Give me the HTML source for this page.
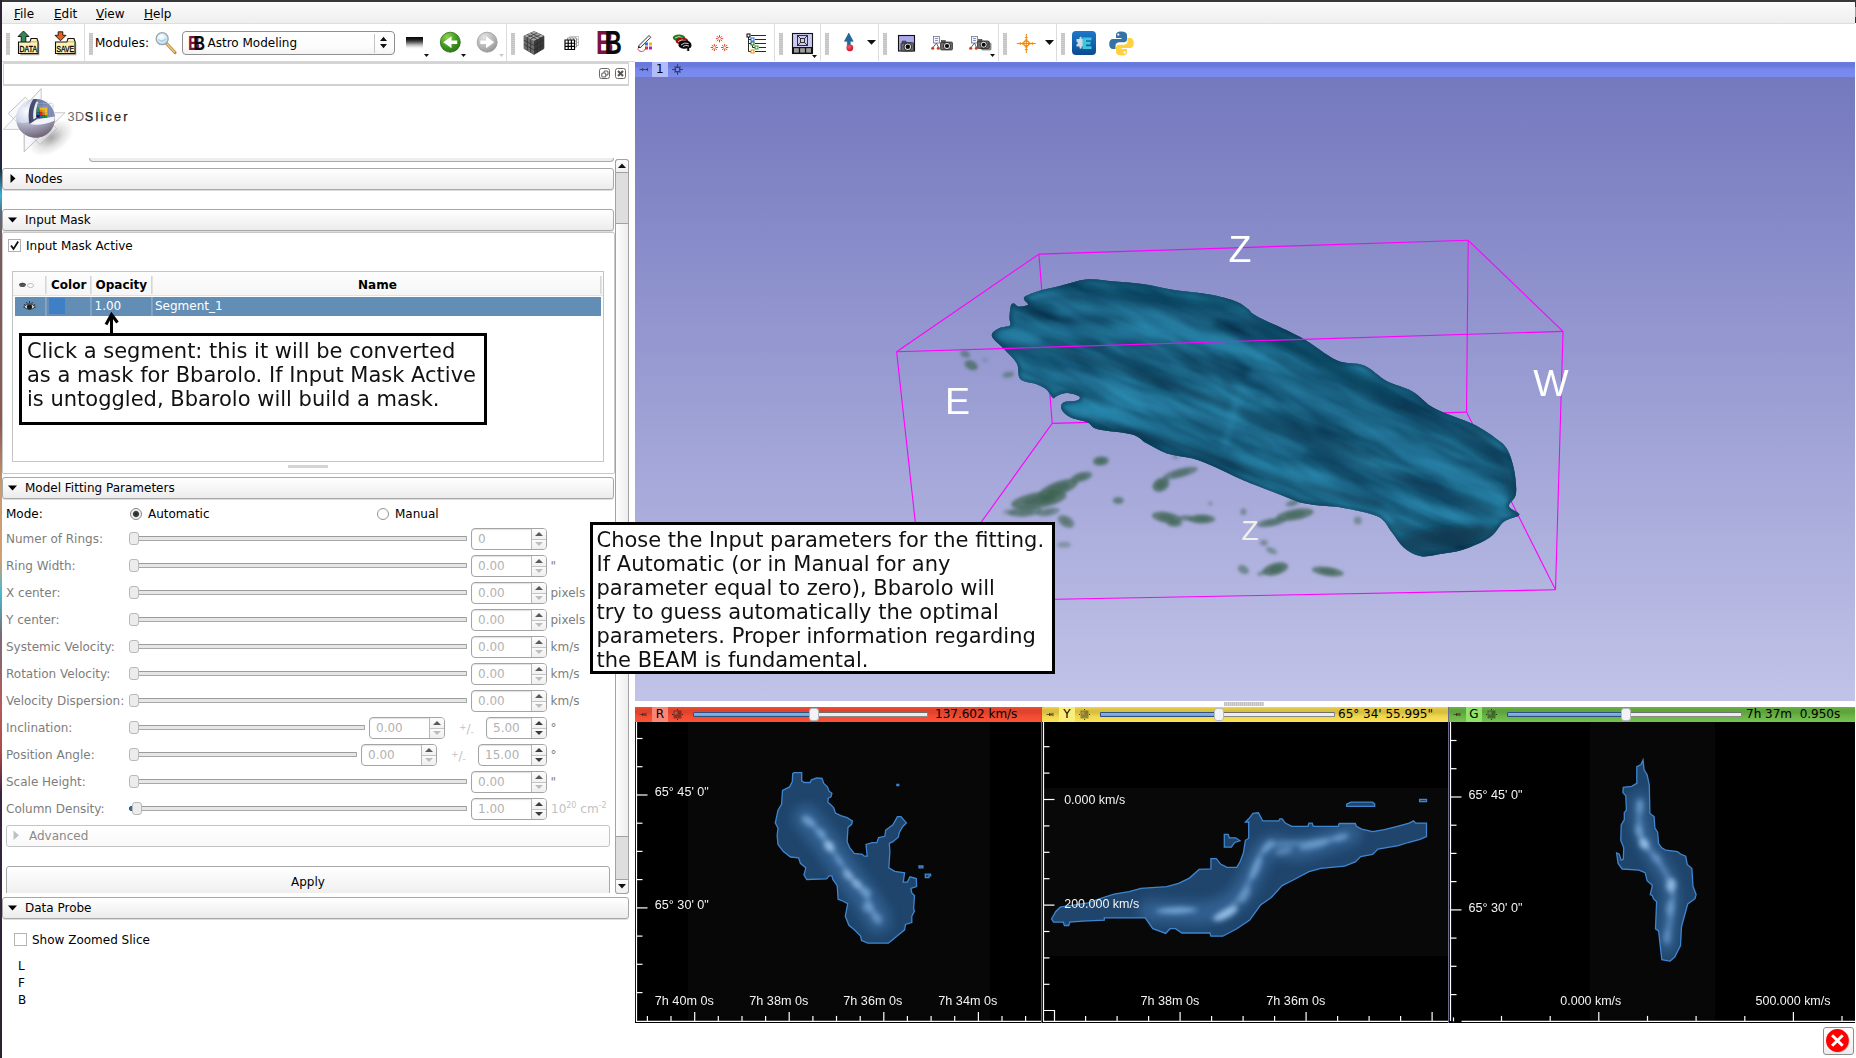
<!DOCTYPE html>
<html><head><meta charset="utf-8"><title>3D Slicer - Astro Modeling</title>
<style>
*{box-sizing:border-box;margin:0;padding:0}
html,body{width:1856px;height:1058px;overflow:hidden;background:#fff}
body{font-family:"DejaVu Sans","Liberation Sans",sans-serif;font-size:12px;color:#000;position:relative}
.a{position:absolute}
.t{position:absolute;white-space:nowrap;line-height:14px;height:14px}
.dis{color:#a0a0a0}
.btn{position:absolute;border:1px solid #a8a8a8;border-radius:3px;background:linear-gradient(#ffffff,#f4f4f4 60%,#ececec);box-shadow:0 1px 0 #ddd}
.sl{position:absolute;height:4px;border:1px solid #a8a8a8;border-top-color:#9c9c9c;border-radius:1px;background:#e6e6e6}
.hd{position:absolute;width:9px;height:13px;border:1px solid #b9b9b9;border-radius:3px;background:#ececec}
.sp{position:absolute;height:22px;border:1px solid #a4a4a4;border-radius:4px;background:#fff;color:#b2b2b2;box-shadow:inset 0 1px 1px #e2e2e2}
.sp i{position:absolute;right:0;top:0;bottom:0;width:15px;border-left:1px solid #b8b8b8;background:linear-gradient(#fdfdfd,#f1f1f1 49%,#c4c4c4 49%,#c4c4c4 53%,#fbfbfb 53%,#efefef);border-radius:0 3px 3px 0}
.sp i:before{content:"";position:absolute;left:3px;top:3px;border:4px solid transparent;border-top:0;border-bottom:4px solid #5a5a5a}
.sp i:after{content:"";position:absolute;left:3px;bottom:3px;border:4px solid transparent;border-bottom:0;border-top:4px solid #bdbdbd}
.sp.on i:after{border-top-color:#3c3c3c}.sp.on i:before{border-bottom-color:#3c3c3c}
.sp span{position:absolute;left:6px;top:3px;line-height:14px}
.grip{position:absolute;width:4px;background:#c8c8c8}
svg{position:absolute;overflow:visible}
</style></head><body>
<!-- window chrome -->
<div class="a" style="left:0;top:0;width:1856px;height:2px;background:#38373a"></div>
<div class="a" style="left:0;top:0;width:2px;height:1058px;background:linear-gradient(#2a2230 0,#2a2438 14%,#1c2a48 16%,#3ab4d8 18.500%,#5a6a7c 20%,#7a5a5c 23%,#8a5a54 40%,#c89a70 46%,#cfa070 53%,#48b8d0 56%,#7a6a78 60%,#b85a58 67%,#b04848 71%,#3a2440 75%,#2a2230 100%)"></div>
<div class="a" id="menubar" style="left:2px;top:2px;width:1853px;height:22px;background:linear-gradient(#fff 0,#fafafa 8%,#eeeeee 100%);border-bottom:1px solid #dedede"></div>
<div class="a" style="left:1855px;top:2px;width:1px;height:21px;background:#35302d"></div>
<div class="a" style="left:1855px;top:7px;width:1px;height:10px;background:#e8953a"></div>
<div class="t" style="left:14px;top:7px"><u>F</u>ile</div>
<div class="t" style="left:54px;top:7px"><u>E</u>dit</div>
<div class="t" style="left:96px;top:7px"><u>V</u>iew</div>
<div class="t" style="left:144px;top:7px"><u>H</u>elp</div>
<!-- toolbar -->
<div class="a" style="left:2px;top:24px;width:1853px;height:37px;background:#fff"></div>
<div class="a" style="left:2px;top:61px;width:633px;height:1px;background:#d6d6d6"></div>
<div class="a" style="left:6px;top:33px;width:4px;height:22px;background:repeating-linear-gradient(#c2c2c2 0 1px,#d0d0d0 1px 2px)"></div>
<div class="a" style="left:89px;top:33px;width:4px;height:22px;background:repeating-linear-gradient(#c2c2c2 0 1px,#d0d0d0 1px 2px)"></div>
<div class="a" style="left:511px;top:33px;width:4px;height:22px;background:repeating-linear-gradient(#c2c2c2 0 1px,#d0d0d0 1px 2px)"></div>
<div class="a" style="left:779px;top:33px;width:4px;height:22px;background:repeating-linear-gradient(#c2c2c2 0 1px,#d0d0d0 1px 2px)"></div>
<div class="a" style="left:825px;top:33px;width:4px;height:22px;background:repeating-linear-gradient(#c2c2c2 0 1px,#d0d0d0 1px 2px)"></div>
<div class="a" style="left:883px;top:33px;width:4px;height:22px;background:repeating-linear-gradient(#c2c2c2 0 1px,#d0d0d0 1px 2px)"></div>
<div class="a" style="left:1003px;top:33px;width:4px;height:22px;background:repeating-linear-gradient(#c2c2c2 0 1px,#d0d0d0 1px 2px)"></div>
<div class="a" style="left:1061px;top:33px;width:4px;height:22px;background:repeating-linear-gradient(#c2c2c2 0 1px,#d0d0d0 1px 2px)"></div>
<div class="a" style="left:84px;top:24px;width:1px;height:37px;background:#dcdcdc"></div>
<div class="a" style="left:506px;top:24px;width:1px;height:37px;background:#dcdcdc"></div>
<div class="a" style="left:774px;top:24px;width:1px;height:37px;background:#dcdcdc"></div>
<div class="a" style="left:820px;top:24px;width:1px;height:37px;background:#dcdcdc"></div>
<div class="a" style="left:878px;top:24px;width:1px;height:37px;background:#dcdcdc"></div>
<div class="a" style="left:998px;top:24px;width:1px;height:37px;background:#dcdcdc"></div>
<div class="a" style="left:1056px;top:24px;width:1px;height:37px;background:#dcdcdc"></div>
<svg style="left:17px;top:30px" width="24" height="26" viewBox="0 0 24 26"><path d="M2.500 24.500V13H13.500L14.500 9.500H20.500L21.500 13V24.500Z" fill="#1a1a1a" opacity=".4" transform="translate(.8 .8)"/><path d="M6.500 1L12 6.500H8.800V12.500H4.200V6.500H1Z" fill="#2e8b57" stroke="#111" stroke-width=".9"/><path d="M1.500 23.500V12H13L14 8.500H20L21 12V23.500Z" fill="#fdf1b4" stroke="#111" stroke-width="1.100"/><path d="M13.500 11.800H20.500" stroke="#c9b45a" stroke-width="1"/><text x="11.300" y="21.900" font-family="'Liberation Sans',sans-serif" font-size="9.500" text-anchor="middle" textLength="17.500" lengthAdjust="spacingAndGlyphs" fill="#000" stroke="#000" stroke-width=".35">DATA</text></svg>
<svg style="left:54px;top:30px" width="24" height="26" viewBox="0 0 24 26"><path d="M2.500 24.500V13H13.500L14.500 9.500H20.500L21.500 13V24.500Z" fill="#1a1a1a" opacity=".4" transform="translate(.8 .8)"/><path d="M6.500 10.800L12 5.300H8.800V1.800H4.200V5.300H1Z" fill="#e8601c" stroke="#111" stroke-width=".9"/><path d="M1.500 23.500V12H13L14 8.500H20L21 12V23.500Z" fill="#fdf1b4" stroke="#111" stroke-width="1.100"/><path d="M13.500 11.800H20.500" stroke="#c9b45a" stroke-width="1"/><text x="11.300" y="21.900" font-family="'Liberation Sans',sans-serif" font-size="9.500" text-anchor="middle" textLength="17.500" lengthAdjust="spacingAndGlyphs" fill="#000" stroke="#000" stroke-width=".35">SAVE</text></svg>
<div class="t" style="left:95px;top:36px;line-height:14px">Modules:</div>
<svg style="left:154px;top:30px" width="24" height="26" viewBox="0 0 24 26"><defs><radialGradient id="mg" cx=".4" cy=".35" r=".7"><stop offset="0" stop-color="#fff"/><stop offset=".7" stop-color="#cfe6f5"/><stop offset="1" stop-color="#a9cfe8"/></radialGradient></defs><path d="M12.500 13.500L21 22.500" stroke="#b98a3c" stroke-width="3.200" stroke-linecap="round"/><path d="M13 14L20.500 22" stroke="#f3c777" stroke-width="1.400" stroke-linecap="round"/><circle cx="8.200" cy="8.700" r="6" fill="url(#mg)" stroke="#9aa4ad" stroke-width="1.300"/><path d="M4.500 9.500Q8 12.500 12 9" stroke="#8fc4e6" stroke-width="1.500" fill="none" opacity=".7"/></svg>
<div class="a" style="left:182px;top:31px;width:213px;height:24px;border:1px solid #8f8f8f;border-radius:4px;background:linear-gradient(#fff,#fcfcfc 70%,#f3f3f3)"></div>
<div class="a" style="left:374px;top:34px;width:1px;height:19px;background:#c4c4c4"></div>
<svg style="left:379px;top:36px" width="9" height="13"><path d="M1 5H8L4.500 .8ZM1 8H8L4.500 12.200Z" fill="#111"/></svg>
<div class="a" style="left:188px;top:33px;width:18px;height:20px;font-family:'Liberation Sans',sans-serif;font-weight:bold;font-size:20px;line-height:20px;letter-spacing:-1px;transform-origin:0 0;transform:scale(.82,1)"><span style="position:absolute;left:0;top:0;color:#7c1242">B</span><span style="position:absolute;left:6.5px;top:0;color:#0a0a0a">B</span></div>
<div class="t" style="left:207.500px;top:36px">Astro Modeling</div>
<div class="a" style="left:406px;top:37px;width:17px;height:12px;background:linear-gradient(#050505 0,#222 25%,#666 45%,#b8b8b8 65%,#eee 85%,#fff)"></div>
<svg style="left:424px;top:54px" width="5" height="3"><path d="M0 0H5L2.5 3Z" fill="#111"/></svg>
<svg style="left:461px;top:54px" width="5" height="3"><path d="M0 0H5L2.5 3Z" fill="#111"/></svg>
<svg style="left:498.5px;top:54px" width="5" height="3"><path d="M0 0H5L2.5 3Z" fill="#c9c9c9"/></svg>
<svg style="left:439px;top:31px" width="60" height="23" viewBox="439 31 60 23"><defs><radialGradient id="gb" cx=".35" cy=".25" r=".85"><stop offset="0" stop-color="#8fd44a"/><stop offset=".55" stop-color="#3f9a20"/><stop offset="1" stop-color="#2a6d16"/></radialGradient><radialGradient id="gf" cx=".35" cy=".25" r=".85"><stop offset="0" stop-color="#e4e4e4"/><stop offset=".6" stop-color="#b4b4b4"/><stop offset="1" stop-color="#8e8e8e"/></radialGradient></defs><circle cx="450.300" cy="42.200" r="10" fill="url(#gb)" stroke="#2c6a18" stroke-width=".8"/><path d="M443.300 42.200L451.500 36.200V40.500H457.200V43.900H451.500V48.200Z" fill="#fff"/><circle cx="487.200" cy="42.200" r="10" fill="url(#gf)" stroke="#9a9a9a" stroke-width=".8"/><path d="M494.200 42.200L486 36.200V40.500H480.300V43.900H486V48.200Z" fill="#fff"/></svg>
<svg style="left:522px;top:30px" width="24" height="26" viewBox="0 0 24 26"><path d="M12 1.500L22 6V18.500L12 24.500L2 18.500V6Z" fill="#5a5a5a" stroke="#3a3a3a" stroke-width=".6"/><path d="M12 1.500L22 6L12 11L2 6Z" fill="#a8a8a8"/><path d="M12 11V24.500L2 18.500V6Z" fill="#6e6e6e"/><path d="M12 11V24.500L22 18.500V6Z" fill="#3c3c3c"/><g stroke="#2a2a2a" stroke-width=".7" fill="none"><path d="M5.300 7.500L15.300 3M8.700 9L18.700 4.500M5.300 4.500L15.300 9.500M8.700 3L18.700 8M2 10.200L12 15.500L22 10.200M2 14.400L12 20L22 14.400M5.300 7.600V20.500M8.700 9.300V22.500M15.300 9.300V22.500M18.700 7.600V20.500"/></g></svg>
<svg style="left:564px;top:35px" width="16" height="16" viewBox="0 0 16 16"><g fill="#fff" stroke="#bdbdbd" stroke-width=".9"><path d="M5.500 1.500H14.500V10.500H5.500ZM8.500 1.500V10.500M11.500 1.500V10.500M5.500 4.500H14.500M5.500 7.500H14.500"/></g><g fill="#fff" stroke="#8a8a8a" stroke-width=".9"><path d="M3.500 3H12.500V12H3.500ZM6.500 3V12M9.500 3V12M3.500 6H12.500M3.500 9H12.500"/></g><g fill="#fff" stroke="#000" stroke-width="1.150"><path d="M1 5H10.500V14.500H1ZM4.200 5V14.500M7.400 5V14.500M1 8.200H10.500M1 11.400H10.500"/></g></svg>
<div class="a" style="left:596px;top:27px;width:30px;height:32px;font-family:'Liberation Sans',sans-serif;font-weight:bold;font-size:32.500px;line-height:32px;transform-origin:0 0;transform:scale(.74,1)"><span style="position:absolute;left:0;top:0;color:#7c1242">B</span><span style="position:absolute;left:11.5px;top:0;color:#0a0a0a">B</span></div>
<svg style="left:636px;top:33px" width="19" height="21" viewBox="0 0 19 21"><path d="M2.500 13L13 2.500L14.800 4.300L4.300 14.800Z" fill="#f4f4f4" stroke="#222" stroke-width=".9"/><path d="M1.800 15.200L2.500 13L4.300 14.800Z" fill="#111"/><path d="M2 15.500C2 19 8 20 9.500 15.500" fill="none" stroke="#e8204a" stroke-width=".9"/><rect x="9" y="9.500" width="3" height="3" fill="#1a84e8"/><rect x="13" y="9.500" width="3" height="3" fill="#f2b21c"/><rect x="9" y="13.500" width="3" height="3" fill="#e82a2a"/><rect x="13" y="13.500" width="3" height="3" fill="#b21ce8"/></svg>
<svg style="left:671px;top:33px" width="22" height="20" viewBox="0 0 22 20"><g stroke-width="1.100" fill="none"><ellipse cx="8" cy="4.800" rx="6.200" ry="3.400" fill="#1d7a1d"/><path d="M4 5Q8 2 12 5" stroke="#e8f2e8" stroke-width=".8"/><ellipse cx="11" cy="8" rx="6.400" ry="3.600" fill="#9a1414"/><path d="M7 8.500Q11 5.500 15 8" stroke="#f2e2e2" stroke-width=".8"/><path d="M7.500 12C7.500 8.800 10.500 7.600 14 7.600C18 7.600 20.500 9.500 20.500 12.200C20.500 14.300 19.500 15 18.200 15.300V18H15.800V15.600C12 16 7.500 15.200 7.500 12Z" fill="#0a0a0a"/><path d="M10 12Q13 9 17.500 10.500M12 13.500Q14.500 11.500 18 13M15.800 15.600V18" stroke="#fff" stroke-width=".8"/></g></svg>
<svg style="left:708px;top:33px" width="24" height="22" viewBox="708 33 24 22"><path d="M720.70 38.70L723.10 38.70M720.35 39.55L722.05 41.25M719.50 39.90L719.50 42.30M718.65 39.55L716.95 41.25M718.30 38.70L715.90 38.70M718.65 37.85L716.95 36.15M719.50 37.50L719.50 35.10M720.35 37.85L722.05 36.15M715.50 47.50L717.90 47.50M715.15 48.35L716.85 50.05M714.30 48.70L714.30 51.10M713.45 48.35L711.75 50.05M713.10 47.50L710.70 47.50M713.45 46.65L711.75 44.95M714.30 46.30L714.30 43.90M715.15 46.65L716.85 44.95M725.90 47.50L728.30 47.50M725.55 48.35L727.25 50.05M724.70 48.70L724.70 51.10M723.85 48.35L722.15 50.05M723.50 47.50L721.10 47.50M723.85 46.65L722.15 44.95M724.70 46.30L724.70 43.90M725.55 46.65L727.25 44.95" stroke="#f03a14" stroke-width="1" fill="none"/></svg>
<svg style="left:746px;top:33px" width="22" height="21" viewBox="746 33 22 21"><g fill="none" stroke="#2a2a2a" stroke-width="1"><path d="M748.500 37V51.500H751M748.500 39.500H751M748.500 43.500H751M752.500 45.500V47.500H755M751 35.500H766M755 39.500H766M755 43.500H766M759 47.500H766M755 51.500H766"/></g><rect x="747" y="34" width="3" height="3" fill="#fff" stroke="#000" stroke-width="1"/><rect x="751" y="38" width="3" height="3" fill="#fff" stroke="#1c6ae0" stroke-width="1"/><rect x="751" y="42" width="3" height="3" fill="#fff" stroke="#156a15" stroke-width="1"/><rect x="755" y="46" width="3" height="3" fill="#fff" stroke="#1aa01a" stroke-width="1"/><rect x="751" y="50" width="3" height="3" fill="#fff" stroke="#f08a14" stroke-width="1"/></svg>
<svg style="left:791px;top:32px" width="24" height="23" viewBox="791 32 24 23"><rect x="792.500" y="33.500" width="20" height="20" fill="#c9c9f2" stroke="#111" stroke-width="1.100"/><rect x="793" y="47" width="19" height="6.500" fill="#111"/><rect x="794" y="48.200" width="4.800" height="4.400" fill="#9c9c9c"/><rect x="800.100" y="48.200" width="4.800" height="4.400" fill="#9c9c9c"/><rect x="806.200" y="48.200" width="4.800" height="4.400" fill="#9c9c9c"/><g fill="none" stroke="#222" stroke-width=".9"><rect x="797.500" y="35.500" width="10" height="10"/><rect x="800.500" y="38.500" width="4" height="4"/><path d="M797.500 35.500l3 3M807.500 35.500l-3 3M797.500 45.500l3-3M807.500 45.500l-3-3"/></g></svg>
<svg style="left:812px;top:54.5px" width="5" height="3"><path d="M0 0H5L2.5 3Z" fill="#111"/></svg>
<svg style="left:842px;top:31px" width="16" height="24" viewBox="842 31 16 24"><defs><radialGradient id="rb" cx=".4" cy=".35" r=".7"><stop offset="0" stop-color="#ff5a6a"/><stop offset="1" stop-color="#c80a1e"/></radialGradient></defs><path d="M848.800 33L853.200 41.300H850.300V46H847.300V41.300H844.400Z" fill="#1f6a9a" stroke="#16507a" stroke-width=".5"/><circle cx="849.800" cy="47.800" r="3.400" fill="url(#rb)"/></svg>
<svg style="left:867px;top:40.2px" width="9" height="4.8"><path d="M0 0H9L4.5 4.8Z" fill="#111"/></svg>
<svg style="left:897px;top:34px" width="20" height="20" viewBox="897 34 20 20"><rect x="898.500" y="35.500" width="16" height="15.500" fill="#a9a9ee" stroke="#111" stroke-width="1.100"/><g transform="translate(901 40) scale(1.05)"><rect x="0" y="2.500" width="12" height="8" rx="1.200" fill="#6a6a6a" stroke="#222" stroke-width=".7"/><rect x="1.200" y="1" width="3.500" height="2" fill="#555" stroke="#222" stroke-width=".5"/><circle cx="6.500" cy="6.500" r="3.600" fill="#e8e8e8" stroke="#111" stroke-width=".8"/><circle cx="6.500" cy="6.500" r="2.100" fill="#0a0a0a"/></g></svg>
<svg style="left:930px;top:34px" width="26" height="20" viewBox="930 34 26 20"><rect x="933.5" y="36.500" width="6" height="6.500" fill="#f4f4fa" stroke="#777" stroke-width=".8"/><path d="M935.0 38.500h3M935.0 40.500h3" stroke="#4a6ad0" stroke-width=".7"/><path d="M936.5 43L933.0 47.500M936.5 43L938.5 47.500" stroke="#555" stroke-width=".9" fill="none"/><circle cx="932.7" cy="48.200" r="1.500" fill="#d03a14"/><circle cx="938.3" cy="48.200" r="1.500" fill="#d03a14"/><g transform="translate(940.5 39.5) scale(1)"><rect x="0" y="2.500" width="12" height="8" rx="1.200" fill="#6a6a6a" stroke="#222" stroke-width=".7"/><rect x="1.200" y="1" width="3.500" height="2" fill="#555" stroke="#222" stroke-width=".5"/><circle cx="6.500" cy="6.500" r="3.600" fill="#e8e8e8" stroke="#111" stroke-width=".8"/><circle cx="6.500" cy="6.500" r="2.100" fill="#0a0a0a"/></g></svg>
<svg style="left:968px;top:34px" width="26" height="20" viewBox="968 34 26 20"><rect x="971.5" y="36.500" width="6" height="6.500" fill="#f4f4fa" stroke="#777" stroke-width=".8"/><path d="M973.0 38.500h3M973.0 40.500h3" stroke="#4a6ad0" stroke-width=".7"/><path d="M974.5 43L971.0 47.500M974.5 43L976.5 47.500" stroke="#555" stroke-width=".9" fill="none"/><circle cx="970.7" cy="48.200" r="1.500" fill="#d03a14"/><circle cx="976.3" cy="48.200" r="1.500" fill="#d03a14"/><rect x="981.500" y="43" width="9.500" height="7" rx="1" fill="#9a9a9a" stroke="#555" stroke-width=".6"/><rect x="980" y="41.500" width="9.500" height="7" rx="1" fill="#8a8a8a" stroke="#444" stroke-width=".6"/><g transform="translate(977.5 38.5) scale(0.95)"><rect x="0" y="2.500" width="12" height="8" rx="1.200" fill="#6a6a6a" stroke="#222" stroke-width=".7"/><rect x="1.200" y="1" width="3.500" height="2" fill="#555" stroke="#222" stroke-width=".5"/><circle cx="6.500" cy="6.500" r="3.600" fill="#e8e8e8" stroke="#111" stroke-width=".8"/><circle cx="6.500" cy="6.500" r="2.100" fill="#0a0a0a"/></g></svg>
<svg style="left:990px;top:54px" width="5" height="3"><path d="M0 0H5L2.5 3Z" fill="#111"/></svg>
<svg style="left:1016px;top:33px" width="21" height="21" viewBox="1016 33 21 21"><g stroke="#f08a0a" fill="none" stroke-width="1.100"><path d="M1026.300 34V53M1016.800 43.500H1035.800"/><circle cx="1026.300" cy="43.500" r="2.600"/><path d="M1024.800 37.500h3M1024.800 40h3M1024.800 47h3M1024.800 49.500h3M1020.300 42v3M1022.800 42v3M1029.800 42v3M1032.300 42v3" stroke-width=".9"/></g></svg>
<svg style="left:1045px;top:40px" width="9" height="5"><path d="M0 0H9L4.5 5Z" fill="#111"/></svg>
<svg style="left:1072px;top:31px" width="24" height="24" viewBox="0 0 24 24"><defs><linearGradient id="em" x1="0" y1="0" x2="0" y2="1"><stop offset="0" stop-color="#1e78c8"/><stop offset="1" stop-color="#0b4a92"/></linearGradient></defs><rect x="0" y="0" width="24" height="24" rx="4" fill="url(#em)"/><path d="M4.500 8h3v-1.200a1.100 1.100 0 0 1 2.200 0V8h2.300v7.500h-2.300v1.200a1.100 1.100 0 0 1-2.200 0V15.500h-3v-2.200a1.300 1.300 0 0 0 0-2.600Z" fill="#d4dae2"/><path d="M10.500 6.500H19.500V9.200H14V10.800H18.500V13.500H14V15.300H19.500V18H10.500Z" fill="#3cc8dc"/></svg>
<svg style="left:1108px;top:30px" width="27" height="27" viewBox="0 0 27 27"><path d="M13.200 1.500C9.500 1.500 8 3 8 5V8H13.500V9H5C2.800 9 1.200 10.800 1.200 14C1.200 17.200 2.800 19 5 19H7.500V15.800C7.500 13.600 9.300 12.200 11.300 12.200H16.200C17.900 12.200 19 11 19 9.300V5C19 3 17 1.500 13.200 1.500Z" fill="#3673a5"/><circle cx="10.300" cy="4.600" r="1.100" fill="#fff"/><path d="M13.800 25.500C17.500 25.500 19 24 19 22V19H13.500V18H22C24.200 18 25.800 16.200 25.800 13C25.800 9.800 24.200 8 22 8H19.500V11.200C19.500 13.400 17.700 14.800 15.700 14.800H10.800C9.100 14.800 8 16 8 17.700V22C8 24 10 25.500 13.800 25.500Z" fill="#ffd040"/><circle cx="16.700" cy="22.400" r="1.100" fill="#fff"/></svg>
<!-- left -->
<div class="a" style="left:3px;top:62px;width:626px;height:24px;background:#fff;border:1px solid #d0d0d0;border-top:2px solid #d4d4d4;border-bottom:2px solid #d2d2d2"></div>
<svg style="left:597px;top:66px" width="32" height="16" viewBox="0 0 32 16"><g fill="none" stroke="#6a6764" stroke-width="1"><rect x="2.500" y="2.500" width="10" height="10" rx="2"/><rect x="18.500" y="2.500" width="10" height="10" rx="2"/><rect x="7" y="5" width="4" height="4" rx="1" stroke-width="1.100"/><rect x="4.800" y="7" width="4" height="4" rx="1" fill="#fff" stroke-width="1.100"/><path d="M21 5l5 5M26 5l-5 5" stroke-width="2" stroke="#55524f"/></g></svg>
<svg style="left:0;top:86px" width="140" height="74" viewBox="0 86 140 74">
<defs><radialGradient id="lg1" cx=".28" cy=".32" r=".85"><stop offset="0" stop-color="#fbfcff"/><stop offset=".35" stop-color="#d3d8ea"/><stop offset=".7" stop-color="#8f94b4"/><stop offset="1" stop-color="#5a4652"/></radialGradient>
<radialGradient id="lsh" cx=".5" cy=".5" r=".5"><stop offset="0" stop-color="#000" stop-opacity=".5"/><stop offset=".55" stop-color="#000" stop-opacity=".16"/><stop offset="1" stop-color="#000" stop-opacity="0"/></radialGradient>
<linearGradient id="lg2" x1="0" y1="0" x2="1" y2="0"><stop offset="0" stop-color="#3f4566"/><stop offset=".3" stop-color="#4d5478"/><stop offset=".32" stop-color="#6f7ca6"/><stop offset="1" stop-color="#7b88b0"/></linearGradient>
<linearGradient id="lg3" x1="0" y1="0" x2="0" y2="1"><stop offset="0" stop-color="#b9bfd8"/><stop offset="1" stop-color="#6b5560"/></linearGradient></defs>
<ellipse cx="52" cy="137" rx="25" ry="15" opacity=".7" fill="url(#lsh)" transform="rotate(-32 53 139)"/>
<g fill="#eceef5" fill-opacity=".35" stroke="#a9a9a9" stroke-width=".6"><path d="M25.300 97.200L8.300 113.500L40.100 144.500L56.700 128.600Z"/><path d="M41.200 88.700L3.400 129.400H24.200L41.200 109Z"/><path d="M24.200 108.900V151.600L65 112.700H54.400Z"/></g>
<circle cx="35.500" cy="118.400" r="19.400" fill="url(#lg1)"/>
<path d="M16.500 122C22 124 30 122.500 35.500 119L54.500 117C56 128 48 138 35.500 137.800C25 137.500 17.500 130 16.500 122Z" fill="url(#lg3)" opacity=".55"/>
<path d="M33.500 99.100C44 98 53.500 105 54.700 116.500L36.500 119.500L29.500 124C27.500 115 29 104.500 33.500 99.100Z" fill="url(#lg2)"/>
<path d="M36.500 101.500C34 106 32.500 113 33.500 119.500L36.500 117.500C36 112 36.500 106 38.200 102Z" fill="#e4ebec"/>
<path d="M36.300 117.500L47.500 117.500L37 107.500Z" fill="#16171c"/>
<path d="M30 124L36.500 119.500L54.700 116.500C54.700 118 54.500 119.500 54 121C46 124.500 36 125.500 30 124Z" fill="#f3f4fa"/>
<path d="M38 103.500H53M38 106H54M47 100.500V117M50 101.500V117M53 104V117M44 100V107" stroke="#aab3d0" stroke-width=".4" fill="none"/>
<g><rect x="37" y="107.400" width="2.500" height="2.500" fill="#17a045"/><rect x="39.600" y="107.400" width="2.500" height="2.500" fill="#f4b400"/><rect x="42.200" y="107.400" width="2.500" height="2.500" fill="#f7c21a"/><rect x="44.800" y="107.400" width="2.500" height="2.500" fill="#f7c21a"/>
<rect x="37" y="110" width="2.500" height="2.500" fill="#17a045"/><rect x="39.600" y="110" width="2.500" height="2.500" fill="#f26a10"/><rect x="42.200" y="110" width="2.500" height="2.500" fill="#f4a000"/><rect x="44.800" y="110" width="2.500" height="2.500" fill="#f7c21a"/>
<rect x="37" y="112.600" width="2.500" height="2.500" fill="#1468d8"/><rect x="39.600" y="112.600" width="2.500" height="2.500" fill="#ee2010"/><rect x="42.200" y="112.600" width="2.500" height="2.500" fill="#f26a10"/><rect x="44.800" y="112.600" width="2.500" height="2.500" fill="#f4b400"/>
<rect x="37.800" y="115.200" width="2" height="2.200" fill="#222"/><rect x="39.600" y="115.200" width="2.500" height="2.300" fill="#1468d8"/><rect x="42.200" y="115.200" width="2.500" height="2.300" fill="#17a045"/><rect x="44.800" y="115.200" width="2.500" height="2.300" fill="#17a045"/></g>
<path d="M25.300 97.200L8.300 113.500M41.200 88.700L24 107M24.200 130V151.600L40 136.500" stroke="#b5b5b5" stroke-width=".5" fill="none" opacity=".7"/>
</svg>
<div class="a" style="left:67.500px;top:109px;font-family:'Liberation Sans',sans-serif;font-size:12.700px;line-height:16px;white-space:nowrap;color:#6c6c6c;letter-spacing:.5px">3D<span style="color:#1e1e1e;letter-spacing:2.200px;-webkit-text-stroke:.25px #1e1e1e">Slicer</span></div>
<div class="a" style="left:89px;top:150px;width:525px;height:12px;border:1px solid #a9a9a9;border-top:0;border-radius:0 0 4px 4px;background:linear-gradient(#f6f6f6,#ececec);clip-path:inset(8px 0 0 0)"></div>
<div class="btn" style="left:2px;top:168px;width:612px;height:22px"></div><svg style="left:10px;top:174.0px" width="6" height="10"><path d="M.5 0V9L5.500 4.500Z" fill="#000"/></svg><div class="t" style="left:25px;top:171.5px;line-height:15px;height:15px;color:#000">Nodes</div>
<div class="btn" style="left:2px;top:209px;width:612px;height:22px"></div><svg style="left:8px;top:217.0px" width="10" height="6"><path d="M0 .5H9L4.500 5.500Z" fill="#000"/></svg><div class="t" style="left:25px;top:212.5px;line-height:15px;height:15px;color:#000">Input Mask</div>
<div class="a" style="left:2px;top:232px;width:613px;height:242px;border:1px solid #c9c9c9;border-radius:2px"></div>
<div class="a" style="left:8px;top:239px;width:13px;height:13px;border:1px solid #b0b0b0;background:#fff"></div><svg style="left:8px;top:239px" width="13" height="13"><path d="M3 6.500L5.500 10L10.200 2.500" fill="none" stroke="#111" stroke-width="1.800"/></svg>
<div class="t" style="left:26px;top:239px">Input Mask Active</div>
<div class="a" style="left:12px;top:271px;width:592px;height:191px;border:1px solid #c4c4c4;background:#fff"></div>
<div class="a" style="left:13px;top:272px;width:590px;height:24px;background:linear-gradient(#fdfdfd,#f6f6f6);border-bottom:1px solid #e2e2e2"></div>
<div class="a" style="left:45px;top:276px;width:2px;height:18px;background:linear-gradient(90deg,#cfcfcf,#ececec)"></div>
<div class="a" style="left:90px;top:276px;width:2px;height:18px;background:linear-gradient(90deg,#cfcfcf,#ececec)"></div>
<div class="a" style="left:151px;top:276px;width:2px;height:18px;background:linear-gradient(90deg,#cfcfcf,#ececec)"></div>
<div class="a" style="left:600px;top:276px;width:2px;height:18px;background:linear-gradient(90deg,#cfcfcf,#ececec)"></div>
<div class="t" style="left:51px;top:278px;font-weight:bold">Color</div><div class="t" style="left:95.500px;top:278px;font-weight:bold">Opacity</div><div class="t" style="left:358px;top:278px;font-weight:bold">Name</div>
<svg style="left:18px;top:280px" width="18" height="10"><ellipse cx="4.500" cy="5" rx="3.200" ry="2" fill="#555"/><path d="M1 4.500Q4.500 1.500 8 4.500" stroke="#333" fill="none" stroke-width=".8"/><ellipse cx="12.500" cy="5.500" rx="3" ry="2" fill="#fff" stroke="#aaa" stroke-width=".8"/></svg>
<div class="a" style="left:15px;top:297px;width:586px;height:19px;background:#628db5"></div>
<div class="a" style="left:45px;top:297px;width:2px;height:19px;background:linear-gradient(90deg,#8aa8c6,#7c9dbf)"></div>
<div class="a" style="left:90px;top:297px;width:2px;height:19px;background:linear-gradient(90deg,#8aa8c6,#7c9dbf)"></div>
<div class="a" style="left:151px;top:297px;width:2px;height:19px;background:linear-gradient(90deg,#8aa8c6,#7c9dbf)"></div>
<div class="a" style="left:49px;top:298px;width:16px;height:16px;background:#3f7fc6"></div>
<svg style="left:22px;top:299px" width="16" height="14"><path d="M1.500 8Q7.500 1.500 13.500 8Q7.500 12.500 1.500 8Z" fill="#c9d3dd" stroke="#2a2a2a" stroke-width=".9"/><circle cx="7.500" cy="7.800" r="2.600" fill="#1c1c1c"/><path d="M2 5l1 1.500M4.500 3l.8 1.800M7.500 2v2M10.500 3l-.8 1.800M13 5l-1 1.500" stroke="#222" stroke-width=".8"/></svg>
<div class="t" style="left:94.500px;top:299px;color:#fff">1.00</div><div class="t" style="left:155px;top:299px;color:#fff">Segment_1</div>
<div class="a" style="left:288px;top:465px;width:40px;height:3px;background:#d4d4d4"></div>
<div class="btn" style="left:2px;top:477px;width:612px;height:22px"></div><svg style="left:8px;top:485.0px" width="10" height="6"><path d="M0 .5H9L4.500 5.500Z" fill="#000"/></svg><div class="t" style="left:25px;top:480.5px;line-height:15px;height:15px;color:#000">Model Fitting Parameters</div>
<div class="t" style="left:6px;top:507px">Mode:</div>
<div class="a" style="left:130px;top:508px;width:12px;height:12px;border:1px solid #8d8580;border-radius:50%;background:radial-gradient(circle at 50% 50%,#1e2226 0,#3c4348 2.600px,#e9e9e9 3.600px,#fafafa 5px)"></div>
<div class="t" style="left:148px;top:507px">Automatic</div>
<div class="a" style="left:377px;top:508px;width:12px;height:12px;border:1px solid #9a9390;border-radius:50%;background:#fdfdfd"></div>
<div class="t" style="left:395px;top:507px">Manual</div>
<div class="t" style="left:6px;top:532px;color:#7d7d7d">Numer of Rings:</div>
<div class="sl" style="left:132px;top:536px;width:335px;height:5px"></div>
<div class="hd" style="left:129px;top:532px;width:10px;height:13px"></div>
<div class="sp" style="left:471px;top:528px;width:76px;height:22px"><span>0</span><i></i></div>
<div class="t" style="left:6px;top:559px;color:#7d7d7d">Ring Width:</div>
<div class="sl" style="left:132px;top:563px;width:335px;height:5px"></div>
<div class="hd" style="left:129px;top:559px;width:10px;height:13px"></div>
<div class="sp" style="left:471px;top:555px;width:76px;height:22px"><span>0.00</span><i></i></div>
<div class="t" style="left:550.500px;top:559px;color:#7d7d7d">"</div>
<div class="t" style="left:6px;top:586px;color:#7d7d7d">X center:</div>
<div class="sl" style="left:132px;top:590px;width:335px;height:5px"></div>
<div class="hd" style="left:129px;top:586px;width:10px;height:13px"></div>
<div class="sp" style="left:471px;top:582px;width:76px;height:22px"><span>0.00</span><i></i></div>
<div class="t" style="left:550.500px;top:586px;color:#7d7d7d">pixels</div>
<div class="t" style="left:6px;top:613px;color:#7d7d7d">Y center:</div>
<div class="sl" style="left:132px;top:617px;width:335px;height:5px"></div>
<div class="hd" style="left:129px;top:613px;width:10px;height:13px"></div>
<div class="sp" style="left:471px;top:609px;width:76px;height:22px"><span>0.00</span><i></i></div>
<div class="t" style="left:550.500px;top:613px;color:#7d7d7d">pixels</div>
<div class="t" style="left:6px;top:640px;color:#7d7d7d">Systemic Velocity:</div>
<div class="sl" style="left:132px;top:644px;width:335px;height:5px"></div>
<div class="hd" style="left:129px;top:640px;width:10px;height:13px"></div>
<div class="sp" style="left:471px;top:636px;width:76px;height:22px"><span>0.00</span><i></i></div>
<div class="t" style="left:550.500px;top:640px;color:#7d7d7d">km/s</div>
<div class="t" style="left:6px;top:667px;color:#7d7d7d">Rotation Velocity:</div>
<div class="sl" style="left:132px;top:671px;width:335px;height:5px"></div>
<div class="hd" style="left:129px;top:667px;width:10px;height:13px"></div>
<div class="sp" style="left:471px;top:663px;width:76px;height:22px"><span>0.00</span><i></i></div>
<div class="t" style="left:550.500px;top:667px;color:#7d7d7d">km/s</div>
<div class="t" style="left:6px;top:694px;color:#7d7d7d">Velocity Dispersion:</div>
<div class="sl" style="left:132px;top:698px;width:335px;height:5px"></div>
<div class="hd" style="left:129px;top:694px;width:10px;height:13px"></div>
<div class="sp" style="left:471px;top:690px;width:76px;height:22px"><span>0.00</span><i></i></div>
<div class="t" style="left:550.500px;top:694px;color:#7d7d7d">km/s</div>
<div class="t" style="left:6px;top:721px;color:#7d7d7d">Inclination:</div>
<div class="sl" style="left:132px;top:725px;width:233px;height:5px"></div>
<div class="hd" style="left:129px;top:721px;width:10px;height:13px"></div>
<div class="sp" style="left:369px;top:717px;width:76px;height:22px"><span>0.00</span><i></i></div>
<div class="t" style="left:459px;top:720px;color:#c2c2c2"><sup style="font-size:9px;vertical-align:3px">+</sup>/<sub style="font-size:9px;vertical-align:-2px">-</sub></div>
<div class="sp on" style="left:486px;top:717px;width:61px;height:22px"><span>5.00</span><i></i></div>
<div class="t" style="left:550.500px;top:721px;color:#7d7d7d">°</div>
<div class="t" style="left:6px;top:748px;color:#7d7d7d">Position Angle:</div>
<div class="sl" style="left:132px;top:752px;width:225px;height:5px"></div>
<div class="hd" style="left:129px;top:748px;width:10px;height:13px"></div>
<div class="sp" style="left:361px;top:744px;width:76px;height:22px"><span>0.00</span><i></i></div>
<div class="t" style="left:451px;top:747px;color:#c2c2c2"><sup style="font-size:9px;vertical-align:3px">+</sup>/<sub style="font-size:9px;vertical-align:-2px">-</sub></div>
<div class="sp on" style="left:478px;top:744px;width:69px;height:22px"><span>15.00</span><i></i></div>
<div class="t" style="left:550.500px;top:748px;color:#7d7d7d">°</div>
<div class="t" style="left:6px;top:775px;color:#7d7d7d">Scale Height:</div>
<div class="sl" style="left:132px;top:779px;width:335px;height:5px"></div>
<div class="hd" style="left:129px;top:775px;width:10px;height:13px"></div>
<div class="sp" style="left:471px;top:771px;width:76px;height:22px"><span>0.00</span><i></i></div>
<div class="t" style="left:550.500px;top:775px;color:#7d7d7d">"</div>
<div class="t" style="left:6px;top:802px;color:#7d7d7d">Column Density:</div>
<div class="a" style="left:129px;top:806px;width:6px;height:5px;background:#3a6ea5;border:1px solid #2c5a8c;border-radius:2px"></div>
<div class="sl" style="left:135px;top:806px;width:332px;height:5px"></div>
<div class="hd" style="left:132px;top:802px;width:10px;height:13px"></div>
<div class="sp on" style="left:471px;top:798px;width:76px;height:22px"><span>1.00</span><i></i></div>
<div class="t" style="left:551px;top:802px;color:#c2c2c2">10<sup style="font-size:8px;vertical-align:5px;line-height:0">20</sup> cm<sup style="font-size:8px;vertical-align:5px;line-height:0">-2</sup></div>
<div class="btn" style="left:6px;top:825px;width:604px;height:22px;border-color:#c4c4c4;box-shadow:none;background:linear-gradient(#fff,#f9f9f9)"></div>
<svg style="left:13px;top:830px" width="7" height="11"><path d="M.5 .5V10L6 5.200Z" fill="#c0c0c0"/></svg><div class="t" style="left:29px;top:829px;color:#8a8a8a">Advanced</div>
<div class="btn" style="left:6px;top:866px;width:604px;height:32px;clip-path:inset(0 -2px 5px -2px);box-shadow:none"></div><div class="t" style="left:6px;width:604px;text-align:center;top:875px">Apply</div>
<div class="a" style="left:615px;top:159px;width:14px;height:735px;border:1px solid #a2a2a2;border-radius:3px;background:#dedede"></div>
<div class="a" style="left:615px;top:159px;width:14px;height:14px;border:1px solid #a2a2a2;border-radius:3px 3px 0 0;background:linear-gradient(#fcfcfc,#efefef)"></div><svg style="left:618px;top:163px" width="8" height="5"><path d="M0 5H8L4 .5Z" fill="#111"/></svg>
<div class="a" style="left:615px;top:879px;width:14px;height:15px;border:1px solid #a2a2a2;border-radius:0 0 3px 3px;background:linear-gradient(#fcfcfc,#efefef)"></div><svg style="left:618px;top:884px" width="8" height="5"><path d="M0 0H8L4 4.500Z" fill="#111"/></svg>
<div class="a" style="left:615px;top:223px;width:14px;height:614px;border:1px solid #a2a2a2;background:linear-gradient(90deg,#fdfdfd,#ededed)"></div>
<div class="btn" style="left:2px;top:897px;width:627px;height:22px"></div><svg style="left:8px;top:905.0px" width="10" height="6"><path d="M0 .5H9L4.500 5.500Z" fill="#000"/></svg><div class="t" style="left:25px;top:900.5px;line-height:15px;height:15px;color:#000">Data Probe</div>
<div class="a" style="left:14px;top:933px;width:13px;height:13px;border:1px solid #b4b4b4;background:#fff"></div><div class="t" style="left:32px;top:933px">Show Zoomed Slice</div>
<div class="t" style="left:18px;top:959px">L</div><div class="t" style="left:18px;top:976px">F</div><div class="t" style="left:18px;top:993px">B</div>
<!-- view3d -->
<div class="a" style="left:635px;top:62px;width:1220px;height:15px;background:linear-gradient(#6a7be0,#6878da 25%,#7788ee 50%,#7a8cf0)"></div>
<div class="a" style="left:652px;top:62px;width:16px;height:15px;background:#b3bbfb"></div>
<div class="t" style="left:656px;top:62px;line-height:15px">1</div>
<svg style="left:635px;top:62px" width="50" height="15" viewBox="0 0 50 15"><g stroke="#3a3f66" fill="none" stroke-width="1"><path d="M4.5 7.5h3M7.5 6v3M8 7.500h4M12.5 6v3" stroke-width="1.2"/><rect x="40.500" y="5.500" width="4" height="4"/><path d="M42.5 2v3.500M42.500 9.500V13M37 7.500h3.500M44.500 7.500H48"/><rect x="39.500" y="4.500" width="6" height="6" opacity=".45"/></g></svg>
<div class="a" style="left:635px;top:77px;width:1220px;height:624px;background:linear-gradient(#7478be,#c1c3e8)"></div>
<svg style="left:0;top:0" width="1856" height="1058" viewBox="0 0 1856 1058">
<defs>
<filter id="b1" x="-20%" y="-20%" width="140%" height="140%"><feGaussianBlur stdDeviation="1.6"/></filter>
<filter id="b3" x="-20%" y="-20%" width="140%" height="140%"><feGaussianBlur stdDeviation="3"/></filter>
<filter id="b05"><feGaussianBlur stdDeviation="0.5"/></filter>
<filter id="tb" x="0" y="0" width="100%" height="100%" color-interpolation-filters="sRGB"><feTurbulence type="fractalNoise" baseFrequency="0.011 0.045" numOctaves="3" seed="7"/><feColorMatrix values="0.2 0 0 0 0.0  0.5 0 0 0 0.125  0.56 0 0 0 0.222  0 0 0 0 1"/></filter>
<clipPath id="cb"><path d="M991.9 335.9 C991.0 332.3 996.7 329.8 999.7 328.1 C1002.7 326.4 1008.4 327.2 1010 325.5 C1011.6 323.8 1009.4 321.3 1009.5 318 C1009.6 314.7 1010.1 308.1 1010.9 305.7 C1011.6 303.3 1012.7 303.4 1014 303.5 C1015.3 303.6 1016.2 306.4 1018.6 306.6 C1021.0 306.8 1027.1 305.9 1028.1 304.8 C1029.1 303.7 1024.9 301.4 1024.5 300 C1024.1 298.6 1022.8 297.8 1025.5 296.2 C1028.2 294.6 1035.2 291.9 1041 290.2 C1046.8 288.5 1052.2 287.7 1060 285.9 C1067.8 284.1 1078.4 280.0 1087.6 279.3 C1096.8 278.6 1106.0 280.8 1115.2 281.6 C1124.4 282.4 1132.8 282.7 1142.8 284.1 C1152.8 285.5 1164.3 288.5 1175.5 290.2 C1186.7 291.9 1199.9 292.6 1210 294.5 C1220.1 296.4 1229.6 299.0 1235.9 301.4 C1242.2 303.8 1244.5 306.5 1248 309 C1251.5 311.5 1248.5 311.7 1257.2 316.4 C1265.9 321.1 1287.1 329.8 1300.3 337.1 C1313.5 344.4 1326.0 355.6 1336.6 360.3 C1347.2 365.0 1355.8 362.1 1364.1 365.5 C1372.4 368.9 1378.5 376.7 1386.6 381 C1394.6 385.3 1404.4 386.8 1412.4 391.4 C1420.4 396.0 1424.7 403.2 1434.8 408.6 C1444.9 414.1 1462.7 419.2 1472.8 424.1 C1482.9 429.0 1489.5 433.8 1495.2 437.9 C1500.9 442.0 1503.8 443.6 1507 449 C1510.2 454.4 1512.6 462.5 1514.1 470 C1515.6 477.5 1516.8 488.1 1515.9 494.1 C1515.1 500.1 1508.4 502.8 1509 506.2 C1509.6 509.6 1520.2 512.2 1519.3 514.8 C1518.4 517.4 1508.7 518.0 1503.8 521.7 C1498.9 525.4 1496.6 532.6 1490 537.2 C1483.4 541.8 1471.9 546.6 1464.1 549.3 C1456.3 552.0 1450.6 552.5 1443.4 553.6 C1436.2 554.8 1427.6 557.2 1421 556.2 C1414.4 555.2 1408.7 551.6 1403.8 547.6 C1398.9 543.6 1396.0 537.3 1391.7 532.1 C1387.4 526.9 1386.0 520.6 1377.9 516.6 C1369.9 512.6 1355.5 510.1 1343.4 507.9 C1331.3 505.7 1317.0 506.2 1305.5 503.6 C1294.0 501.0 1285.0 496.3 1274.5 492.4 C1264.0 488.5 1252.7 484.2 1242.8 480 C1232.9 475.8 1223.3 470.6 1215 467 C1206.7 463.4 1200.8 460.9 1192.8 458.6 C1184.8 456.3 1174.7 456.0 1166.9 453.4 C1159.1 450.8 1152.0 446.2 1146.2 443.1 C1140.5 440.0 1140.5 436.8 1132.4 434.5 C1124.4 432.2 1105.4 431.3 1097.9 429.3 C1090.4 427.3 1092.2 424.4 1087.6 422.4 C1083.0 420.4 1074.6 419.3 1070.3 417.2 C1066.0 415.1 1062.8 412.1 1061.7 409.6 C1060.6 407.1 1060.8 403.9 1063.4 402.4 C1066.0 400.9 1074.6 401.5 1077.2 400.5 C1079.8 399.5 1080.9 397.4 1079 396.2 C1077.1 394.9 1069.7 393.0 1066 393 C1062.3 393.0 1058.8 395.4 1056.6 396.2 C1054.4 397.0 1054.7 399.1 1053 398 C1051.3 396.9 1049.0 391.6 1046.2 389.3 C1043.4 387.0 1040.2 385.8 1035.9 384.1 C1031.6 382.4 1023.5 382.4 1020.3 379 C1017.1 375.6 1019.5 368.3 1016.9 363.4 C1014.3 358.5 1009.0 354.3 1004.8 349.7 C1000.6 345.1 992.8 339.5 991.9 335.9Z"/></clipPath>
<linearGradient id="bg" x1="0" y1="0" x2="1" y2="1"><stop offset="0" stop-color="#1b6489"/><stop offset="1" stop-color="#185a7f"/></linearGradient>
</defs>
<g stroke="#ff00ff" stroke-width="1.1" fill="none"><line x1="1038.9" y1="254.1" x2="1468.2" y2="240.3"/><line x1="1038.9" y1="254.1" x2="1052.2" y2="423.4"/><line x1="1468.2" y1="240.3" x2="1466.5" y2="412.1"/><line x1="1052.2" y1="423.4" x2="1466.5" y2="412.1"/><line x1="1052.2" y1="423.4" x2="924" y2="601.8"/><line x1="1466.5" y1="412.1" x2="1555.5" y2="589.8"/><line x1="1038.9" y1="254.1" x2="896.6" y2="351.8"/><line x1="1468.2" y1="240.3" x2="1563" y2="331.4"/></g>
<g fill="#44695a" filter="url(#b1)"><ellipse cx="965.2" cy="354" rx="5" ry="3.5" transform="rotate(20 965.2 354)" opacity="0.6"/><ellipse cx="971.2" cy="365.2" rx="7" ry="4.5" transform="rotate(25 971.2 365.2)" opacity="0.75"/><ellipse cx="1008.3" cy="374.7" rx="6" ry="3" transform="rotate(-10 1008.3 374.7)" opacity="0.55"/><ellipse cx="985" cy="360" rx="3" ry="2" transform="rotate(0 985 360)" opacity="0.25"/><ellipse cx="1100.9" cy="461" rx="8" ry="4.5" transform="rotate(-5 1100.9 461)" opacity="0.75"/><ellipse cx="1081.5" cy="476.9" rx="11" ry="4.5" transform="rotate(-15 1081.5 476.9)" opacity="0.7"/><ellipse cx="1058.2" cy="488.5" rx="21" ry="7" transform="rotate(-20 1058.2 488.5)" opacity="0.8"/><ellipse cx="1038.8" cy="500.1" rx="28" ry="8" transform="rotate(-10 1038.8 500.1)" opacity="0.8"/><ellipse cx="1025.2" cy="511.8" rx="17" ry="5" transform="rotate(-5 1025.2 511.8)" opacity="0.6"/><ellipse cx="1050" cy="498" rx="10" ry="5" transform="rotate(-20 1050 498)" opacity="0.5"/><ellipse cx="1066" cy="521.5" rx="9" ry="5.5" transform="rotate(30 1066 521.5)" opacity="0.6"/><ellipse cx="1064" cy="544.7" rx="7" ry="3" transform="rotate(0 1064 544.7)" opacity="0.4"/><ellipse cx="1048" cy="512" rx="12" ry="4" transform="rotate(-10 1048 512)" opacity="0.5"/><ellipse cx="1010" cy="512" rx="7" ry="3" transform="rotate(0 1010 512)" opacity="0.4"/><ellipse cx="1118.3" cy="500.5" rx="5.5" ry="3.5" transform="rotate(0 1118.3 500.5)" opacity="0.7"/><ellipse cx="1161" cy="484.6" rx="9" ry="6.5" transform="rotate(-30 1161 484.6)" opacity="0.8"/><ellipse cx="1180.4" cy="473" rx="18" ry="4.5" transform="rotate(-15 1180.4 473)" opacity="0.65"/><ellipse cx="1175.5" cy="457" rx="3" ry="2" transform="rotate(0 1175.5 457)" opacity="0.4"/><ellipse cx="1210.4" cy="503.4" rx="2.5" ry="2" transform="rotate(0 1210.4 503.4)" opacity="0.4"/><ellipse cx="1166.8" cy="517.6" rx="15" ry="5.5" transform="rotate(10 1166.8 517.6)" opacity="0.75"/><ellipse cx="1201.7" cy="519.1" rx="13.5" ry="4.5" transform="rotate(0 1201.7 519.1)" opacity="0.75"/><ellipse cx="1174.5" cy="523.4" rx="8" ry="3.5" transform="rotate(0 1174.5 523.4)" opacity="0.6"/><ellipse cx="1186" cy="518" rx="8" ry="3" transform="rotate(0 1186 518)" opacity="0.5"/><ellipse cx="1294.8" cy="514.7" rx="19" ry="5.5" transform="rotate(-10 1294.8 514.7)" opacity="0.75"/><ellipse cx="1271.5" cy="522.4" rx="15" ry="4" transform="rotate(-10 1271.5 522.4)" opacity="0.65"/><ellipse cx="1292.9" cy="503" rx="8" ry="3" transform="rotate(-15 1292.9 503)" opacity="0.5"/><ellipse cx="1243.4" cy="511.8" rx="3" ry="3.5" transform="rotate(0 1243.4 511.8)" opacity="0.5"/><ellipse cx="1263.8" cy="542.8" rx="4" ry="3" transform="rotate(0 1263.8 542.8)" opacity="0.5"/><ellipse cx="1271.5" cy="550.6" rx="6" ry="3" transform="rotate(25 1271.5 550.6)" opacity="0.5"/><ellipse cx="1243.4" cy="569.6" rx="6" ry="4" transform="rotate(30 1243.4 569.6)" opacity="0.6"/><ellipse cx="1275.4" cy="569" rx="13" ry="6" transform="rotate(-15 1275.4 569)" opacity="0.8"/><ellipse cx="1327.8" cy="571.5" rx="16" ry="4.5" transform="rotate(8 1327.8 571.5)" opacity="0.75"/><ellipse cx="1357.8" cy="520.5" rx="4" ry="4" transform="rotate(0 1357.8 520.5)" opacity="0.5"/><ellipse cx="1262" cy="573" rx="5" ry="2.5" transform="rotate(-20 1262 573)" opacity="0.5"/></g><g fill="#2f5641" filter="url(#b1)" opacity=".5"><ellipse cx="1100.9" cy="461" rx="4.4" ry="2.5" transform="rotate(-5 1100.9 461)" opacity="0.75"/><ellipse cx="1081.5" cy="476.9" rx="6.1" ry="2.5" transform="rotate(-15 1081.5 476.9)" opacity="0.7"/><ellipse cx="1058.2" cy="488.5" rx="11.6" ry="3.9" transform="rotate(-20 1058.2 488.5)" opacity="0.8"/><ellipse cx="1038.8" cy="500.1" rx="15.4" ry="4.4" transform="rotate(-10 1038.8 500.1)" opacity="0.8"/><ellipse cx="1025.2" cy="511.8" rx="9.4" ry="2.8" transform="rotate(-5 1025.2 511.8)" opacity="0.6"/><ellipse cx="1050" cy="498" rx="5.5" ry="2.8" transform="rotate(-20 1050 498)" opacity="0.5"/><ellipse cx="1066" cy="521.5" rx="5.0" ry="3.0" transform="rotate(30 1066 521.5)" opacity="0.6"/><ellipse cx="1048" cy="512" rx="6.6" ry="2.2" transform="rotate(-10 1048 512)" opacity="0.5"/><ellipse cx="1161" cy="484.6" rx="5.0" ry="3.6" transform="rotate(-30 1161 484.6)" opacity="0.8"/><ellipse cx="1180.4" cy="473" rx="9.9" ry="2.5" transform="rotate(-15 1180.4 473)" opacity="0.65"/><ellipse cx="1166.8" cy="517.6" rx="8.2" ry="3.0" transform="rotate(10 1166.8 517.6)" opacity="0.75"/><ellipse cx="1201.7" cy="519.1" rx="7.4" ry="2.5" transform="rotate(0 1201.7 519.1)" opacity="0.75"/><ellipse cx="1174.5" cy="523.4" rx="4.4" ry="1.9" transform="rotate(0 1174.5 523.4)" opacity="0.6"/><ellipse cx="1186" cy="518" rx="4.4" ry="1.7" transform="rotate(0 1186 518)" opacity="0.5"/><ellipse cx="1294.8" cy="514.7" rx="10.5" ry="3.0" transform="rotate(-10 1294.8 514.7)" opacity="0.75"/><ellipse cx="1271.5" cy="522.4" rx="8.2" ry="2.2" transform="rotate(-10 1271.5 522.4)" opacity="0.65"/><ellipse cx="1292.9" cy="503" rx="4.4" ry="1.7" transform="rotate(-15 1292.9 503)" opacity="0.5"/><ellipse cx="1275.4" cy="569" rx="7.2" ry="3.3" transform="rotate(-15 1275.4 569)" opacity="0.8"/><ellipse cx="1327.8" cy="571.5" rx="8.8" ry="2.5" transform="rotate(8 1327.8 571.5)" opacity="0.75"/></g>
<path d="M991.9 335.9 C991.0 332.3 996.7 329.8 999.7 328.1 C1002.7 326.4 1008.4 327.2 1010 325.5 C1011.6 323.8 1009.4 321.3 1009.5 318 C1009.6 314.7 1010.1 308.1 1010.9 305.7 C1011.6 303.3 1012.7 303.4 1014 303.5 C1015.3 303.6 1016.2 306.4 1018.6 306.6 C1021.0 306.8 1027.1 305.9 1028.1 304.8 C1029.1 303.7 1024.9 301.4 1024.5 300 C1024.1 298.6 1022.8 297.8 1025.5 296.2 C1028.2 294.6 1035.2 291.9 1041 290.2 C1046.8 288.5 1052.2 287.7 1060 285.9 C1067.8 284.1 1078.4 280.0 1087.6 279.3 C1096.8 278.6 1106.0 280.8 1115.2 281.6 C1124.4 282.4 1132.8 282.7 1142.8 284.1 C1152.8 285.5 1164.3 288.5 1175.5 290.2 C1186.7 291.9 1199.9 292.6 1210 294.5 C1220.1 296.4 1229.6 299.0 1235.9 301.4 C1242.2 303.8 1244.5 306.5 1248 309 C1251.5 311.5 1248.5 311.7 1257.2 316.4 C1265.9 321.1 1287.1 329.8 1300.3 337.1 C1313.5 344.4 1326.0 355.6 1336.6 360.3 C1347.2 365.0 1355.8 362.1 1364.1 365.5 C1372.4 368.9 1378.5 376.7 1386.6 381 C1394.6 385.3 1404.4 386.8 1412.4 391.4 C1420.4 396.0 1424.7 403.2 1434.8 408.6 C1444.9 414.1 1462.7 419.2 1472.8 424.1 C1482.9 429.0 1489.5 433.8 1495.2 437.9 C1500.9 442.0 1503.8 443.6 1507 449 C1510.2 454.4 1512.6 462.5 1514.1 470 C1515.6 477.5 1516.8 488.1 1515.9 494.1 C1515.1 500.1 1508.4 502.8 1509 506.2 C1509.6 509.6 1520.2 512.2 1519.3 514.8 C1518.4 517.4 1508.7 518.0 1503.8 521.7 C1498.9 525.4 1496.6 532.6 1490 537.2 C1483.4 541.8 1471.9 546.6 1464.1 549.3 C1456.3 552.0 1450.6 552.5 1443.4 553.6 C1436.2 554.8 1427.6 557.2 1421 556.2 C1414.4 555.2 1408.7 551.6 1403.8 547.6 C1398.9 543.6 1396.0 537.3 1391.7 532.1 C1387.4 526.9 1386.0 520.6 1377.9 516.6 C1369.9 512.6 1355.5 510.1 1343.4 507.9 C1331.3 505.7 1317.0 506.2 1305.5 503.6 C1294.0 501.0 1285.0 496.3 1274.5 492.4 C1264.0 488.5 1252.7 484.2 1242.8 480 C1232.9 475.8 1223.3 470.6 1215 467 C1206.7 463.4 1200.8 460.9 1192.8 458.6 C1184.8 456.3 1174.7 456.0 1166.9 453.4 C1159.1 450.8 1152.0 446.2 1146.2 443.1 C1140.5 440.0 1140.5 436.8 1132.4 434.5 C1124.4 432.2 1105.4 431.3 1097.9 429.3 C1090.4 427.3 1092.2 424.4 1087.6 422.4 C1083.0 420.4 1074.6 419.3 1070.3 417.2 C1066.0 415.1 1062.8 412.1 1061.7 409.6 C1060.6 407.1 1060.8 403.9 1063.4 402.4 C1066.0 400.9 1074.6 401.5 1077.2 400.5 C1079.8 399.5 1080.9 397.4 1079 396.2 C1077.1 394.9 1069.7 393.0 1066 393 C1062.3 393.0 1058.8 395.4 1056.6 396.2 C1054.4 397.0 1054.7 399.1 1053 398 C1051.3 396.9 1049.0 391.6 1046.2 389.3 C1043.4 387.0 1040.2 385.8 1035.9 384.1 C1031.6 382.4 1023.5 382.4 1020.3 379 C1017.1 375.6 1019.5 368.3 1016.9 363.4 C1014.3 358.5 1009.0 354.3 1004.8 349.7 C1000.6 345.1 992.8 339.5 991.9 335.9Z" fill="url(#bg)" filter="url(#b05)"/>
<g clip-path="url(#cb)"><rect x="850" y="150" width="800" height="500" transform="rotate(24 1250 420)" filter="url(#tb)"/><g filter="url(#b3)" opacity=".8"><path d="M1000 333 C1040 325 1080 335 1130 330 S1220 340 1260 355" stroke="#2b86ad" stroke-width="14" opacity="0.55" fill="none" stroke-linecap="round"/><path d="M1040 300 C1090 292 1150 300 1200 308 S1260 330 1290 345" stroke="#154d6b" stroke-width="10" opacity="0.7" fill="none" stroke-linecap="round"/><path d="M1060 312 C1110 305 1160 318 1210 322" stroke="#2a83aa" stroke-width="9" opacity="0.5" fill="none" stroke-linecap="round"/><path d="M1020 360 C1070 372 1120 392 1180 412 S1260 440 1300 450" stroke="#2a83aa" stroke-width="12" opacity="0.5" fill="none" stroke-linecap="round"/><path d="M1010 345 C1070 350 1130 370 1200 395 S1300 430 1370 455" stroke="#124560" stroke-width="9" opacity="0.65" fill="none" stroke-linecap="round"/><path d="M1060 400 C1100 410 1150 425 1190 440 S1260 465 1300 478" stroke="#2c88b0" stroke-width="8" opacity="0.55" fill="none" stroke-linecap="round"/><path d="M1090 418 C1140 432 1200 452 1260 472 S1340 495 1380 505" stroke="#0f3d55" stroke-width="7" opacity="0.7" fill="none" stroke-linecap="round"/><path d="M1260 330 C1300 350 1350 378 1400 405 S1470 440 1500 460" stroke="#134a66" stroke-width="12" opacity="0.7" fill="none" stroke-linecap="round"/><path d="M1255 375 C1300 390 1350 420 1400 445 S1470 480 1500 495" stroke="#2b86ad" stroke-width="14" opacity="0.5" fill="none" stroke-linecap="round"/><path d="M1250 420 C1300 440 1350 462 1400 478 S1460 500 1490 512" stroke="#124560" stroke-width="10" opacity="0.6" fill="none" stroke-linecap="round"/><path d="M1290 470 C1330 480 1380 492 1420 505 S1470 520 1495 522" stroke="#2a83aa" stroke-width="9" opacity="0.5" fill="none" stroke-linecap="round"/><path d="M1395 525 C1420 538 1450 540 1480 530" stroke="#0f3d55" stroke-width="12" opacity="0.7" fill="none" stroke-linecap="round"/><path d="M1240 390 L1225 445" stroke="#3090b8" stroke-width="6" opacity="0.55" fill="none" stroke-linecap="round"/><path d="M1225 380 C1235 395 1250 400 1262 398" stroke="#0f3d55" stroke-width="6" opacity="0.6" fill="none" stroke-linecap="round"/><path d="M1470 430 C1495 445 1510 470 1512 505" stroke="#113f58" stroke-width="8" opacity="0.6" fill="none" stroke-linecap="round"/></g><g filter="url(#b3)" fill="#0c3850"><ellipse cx="1445" cy="538" rx="52" ry="11" transform="rotate(-8 1445 538)" opacity=".6"/><ellipse cx="1150" cy="296" rx="95" ry="7" transform="rotate(7 1150 296)" opacity=".45"/><ellipse cx="1330" cy="366" rx="80" ry="7" transform="rotate(27 1330 366)" opacity=".5"/><ellipse cx="1040" cy="360" rx="30" ry="8" transform="rotate(20 1040 360)" opacity=".3"/></g><g filter="url(#b3)" fill="#2c8ab2"><ellipse cx="1020" cy="338" rx="22" ry="6" transform="rotate(5 1020 338)" opacity=".5"/><ellipse cx="1085" cy="415" rx="20" ry="5" transform="rotate(15 1085 415)" opacity=".45"/></g>
<path d="M991.9 335.9 C991.0 332.3 996.7 329.8 999.7 328.1 C1002.7 326.4 1008.4 327.2 1010 325.5 C1011.6 323.8 1009.4 321.3 1009.5 318 C1009.6 314.7 1010.1 308.1 1010.9 305.7 C1011.6 303.3 1012.7 303.4 1014 303.5 C1015.3 303.6 1016.2 306.4 1018.6 306.6 C1021.0 306.8 1027.1 305.9 1028.1 304.8 C1029.1 303.7 1024.9 301.4 1024.5 300 C1024.1 298.6 1022.8 297.8 1025.5 296.2 C1028.2 294.6 1035.2 291.9 1041 290.2 C1046.8 288.5 1052.2 287.7 1060 285.9 C1067.8 284.1 1078.4 280.0 1087.6 279.3 C1096.8 278.6 1106.0 280.8 1115.2 281.6 C1124.4 282.4 1132.8 282.7 1142.8 284.1 C1152.8 285.5 1164.3 288.5 1175.5 290.2 C1186.7 291.9 1199.9 292.6 1210 294.5 C1220.1 296.4 1229.6 299.0 1235.9 301.4 C1242.2 303.8 1244.5 306.5 1248 309 C1251.5 311.5 1248.5 311.7 1257.2 316.4 C1265.9 321.1 1287.1 329.8 1300.3 337.1 C1313.5 344.4 1326.0 355.6 1336.6 360.3 C1347.2 365.0 1355.8 362.1 1364.1 365.5 C1372.4 368.9 1378.5 376.7 1386.6 381 C1394.6 385.3 1404.4 386.8 1412.4 391.4 C1420.4 396.0 1424.7 403.2 1434.8 408.6 C1444.9 414.1 1462.7 419.2 1472.8 424.1 C1482.9 429.0 1489.5 433.8 1495.2 437.9 C1500.9 442.0 1503.8 443.6 1507 449 C1510.2 454.4 1512.6 462.5 1514.1 470 C1515.6 477.5 1516.8 488.1 1515.9 494.1 C1515.1 500.1 1508.4 502.8 1509 506.2 C1509.6 509.6 1520.2 512.2 1519.3 514.8 C1518.4 517.4 1508.7 518.0 1503.8 521.7 C1498.9 525.4 1496.6 532.6 1490 537.2 C1483.4 541.8 1471.9 546.6 1464.1 549.3 C1456.3 552.0 1450.6 552.5 1443.4 553.6 C1436.2 554.8 1427.6 557.2 1421 556.2 C1414.4 555.2 1408.7 551.6 1403.8 547.6 C1398.9 543.6 1396.0 537.3 1391.7 532.1 C1387.4 526.9 1386.0 520.6 1377.9 516.6 C1369.9 512.6 1355.5 510.1 1343.4 507.9 C1331.3 505.7 1317.0 506.2 1305.5 503.6 C1294.0 501.0 1285.0 496.3 1274.5 492.4 C1264.0 488.5 1252.7 484.2 1242.8 480 C1232.9 475.8 1223.3 470.6 1215 467 C1206.7 463.4 1200.8 460.9 1192.8 458.6 C1184.8 456.3 1174.7 456.0 1166.9 453.4 C1159.1 450.8 1152.0 446.2 1146.2 443.1 C1140.5 440.0 1140.5 436.8 1132.4 434.5 C1124.4 432.2 1105.4 431.3 1097.9 429.3 C1090.4 427.3 1092.2 424.4 1087.6 422.4 C1083.0 420.4 1074.6 419.3 1070.3 417.2 C1066.0 415.1 1062.8 412.1 1061.7 409.6 C1060.6 407.1 1060.8 403.9 1063.4 402.4 C1066.0 400.9 1074.6 401.5 1077.2 400.5 C1079.8 399.5 1080.9 397.4 1079 396.2 C1077.1 394.9 1069.7 393.0 1066 393 C1062.3 393.0 1058.8 395.4 1056.6 396.2 C1054.4 397.0 1054.7 399.1 1053 398 C1051.3 396.9 1049.0 391.6 1046.2 389.3 C1043.4 387.0 1040.2 385.8 1035.9 384.1 C1031.6 382.4 1023.5 382.4 1020.3 379 C1017.1 375.6 1019.5 368.3 1016.9 363.4 C1014.3 358.5 1009.0 354.3 1004.8 349.7 C1000.6 345.1 992.8 339.5 991.9 335.9Z" fill="none" stroke="#0d3a52" stroke-width="5" opacity=".55" filter="url(#b1)"/></g>
<g stroke="#ff00ff" stroke-width="1.1" fill="none"><line x1="896.6" y1="351.8" x2="1563" y2="331.4"/><line x1="896.6" y1="351.8" x2="924" y2="601.8"/><line x1="1563" y1="331.4" x2="1555.5" y2="589.8"/><line x1="924" y1="601.8" x2="1555.5" y2="589.8"/></g>
<g fill="#fff" font-family="'Liberation Sans',sans-serif" font-size="37.500" text-anchor="middle"><text x="1240" y="262.400">Z</text><text x="957.500" y="414">E</text><text x="1551" y="396.300">W</text><text x="1250" y="540.300" font-size="28" fill="#f1f1ea">Z</text></g>
</svg>
<!-- slices -->
<div class="a" style="left:635px;top:722px;width:1220px;height:301px;background:#000"></div><div class="a" style="left:688px;top:722px;width:302px;height:299px;background:#070707"></div><div class="a" style="left:1044px;top:788px;width:404px;height:168px;background:#080808"></div><div class="a" style="left:1590px;top:722px;width:125px;height:299px;background:#070707"></div><div class="a" style="left:635px;top:707px;width:406px;height:15px;background:linear-gradient(#f44c33 0,#df432b 20%,#df432b 38%,#f44c33 62%,#fb5238 100%)"></div><div class="a" style="left:652px;top:707px;width:16px;height:15px;background:#fb8577"></div><div class="t" style="left:652px;top:707px;width:16px;text-align:center;line-height:15px">R</div><svg style="left:635px;top:707px" width="60" height="15" viewBox="0 0 60 15"><g stroke="#4a2a20" stroke-opacity=".75" fill="none"><path d="M4.500 7.500h2.500" stroke-width="1"/><path d="M7 7.500h3.500" stroke-width="2.200"/><path d="M7.500 6v3M11 5.800v3.400" stroke-width="1"/></g><rect x="38.500" y="3.500" width="8" height="8" fill="#000" opacity=".38"/><rect x="39.500" y="4.500" width="3" height="3" fill="#fff" opacity=".25"/><path d="M42.500 2v1M42.500 12v1M37 7.500h1M47 7.500h1" stroke="#000" opacity=".7"/></svg><div class="a" style="left:693px;top:712px;width:235px;height:5px;border:1px solid #8a8a8a;border-top-color:#6e6e6e;border-radius:1px;background:#ececec"></div><div class="a" style="left:693px;top:712px;width:121px;height:5px;border:1px solid #2f4f7f;border-radius:1px;background:linear-gradient(#86b6e4,#6ea4d8)"></div><div class="a" style="left:809px;top:708px;width:10px;height:13px;border:1px solid #b4b8c0;border-radius:3px;background:#f3f3f3"></div><div class="t" style="left:935px;top:707px;line-height:15px;word-spacing:0">137.602 km/s</div><div class="a" style="left:1042px;top:707px;width:406px;height:15px;background:linear-gradient(#efd64c 0,#d9bf40 20%,#d9bf40 38%,#efd64c 62%,#fbe25a 100%)"></div><div class="a" style="left:1059px;top:707px;width:16px;height:15px;background:#faee7a"></div><div class="t" style="left:1059px;top:707px;width:16px;text-align:center;line-height:15px">Y</div><svg style="left:1042px;top:707px" width="60" height="15" viewBox="0 0 60 15"><g stroke="#4a2a20" stroke-opacity=".75" fill="none"><path d="M4.500 7.500h2.500" stroke-width="1"/><path d="M7 7.500h3.500" stroke-width="2.200"/><path d="M7.500 6v3M11 5.800v3.400" stroke-width="1"/></g><rect x="38.500" y="3.500" width="8" height="8" fill="#000" opacity=".38"/><rect x="39.500" y="4.500" width="3" height="3" fill="#fff" opacity=".25"/><path d="M42.500 2v1M42.500 12v1M37 7.500h1M47 7.500h1" stroke="#000" opacity=".7"/></svg><div class="a" style="left:1100px;top:712px;width:235px;height:5px;border:1px solid #8a8a8a;border-top-color:#6e6e6e;border-radius:1px;background:#ececec"></div><div class="a" style="left:1100px;top:712px;width:119px;height:5px;border:1px solid #2f4f7f;border-radius:1px;background:linear-gradient(#86b6e4,#6ea4d8)"></div><div class="a" style="left:1214px;top:708px;width:10px;height:13px;border:1px solid #b4b8c0;border-radius:3px;background:#f3f3f3"></div><div class="t" style="left:1338px;top:707px;line-height:15px;word-spacing:0">65° 34' 55.995"</div><div class="a" style="left:1449px;top:707px;width:406px;height:15px;background:linear-gradient(#6cb448 0,#5ea43c 20%,#5ea43c 38%,#6cb448 62%,#76c252 100%)"></div><div class="a" style="left:1466px;top:707px;width:16px;height:15px;background:#8fe26a"></div><div class="t" style="left:1466px;top:707px;width:16px;text-align:center;line-height:15px">G</div><svg style="left:1449px;top:707px" width="60" height="15" viewBox="0 0 60 15"><g stroke="#4a2a20" stroke-opacity=".75" fill="none"><path d="M4.500 7.500h2.500" stroke-width="1"/><path d="M7 7.500h3.500" stroke-width="2.200"/><path d="M7.500 6v3M11 5.800v3.400" stroke-width="1"/></g><rect x="38.500" y="3.500" width="8" height="8" fill="#000" opacity=".38"/><rect x="39.500" y="4.500" width="3" height="3" fill="#fff" opacity=".25"/><path d="M42.500 2v1M42.500 12v1M37 7.500h1M47 7.500h1" stroke="#000" opacity=".7"/></svg><div class="a" style="left:1507px;top:712px;width:235px;height:5px;border:1px solid #8a8a8a;border-top-color:#6e6e6e;border-radius:1px;background:#ececec"></div><div class="a" style="left:1507px;top:712px;width:119px;height:5px;border:1px solid #2f4f7f;border-radius:1px;background:linear-gradient(#86b6e4,#6ea4d8)"></div><div class="a" style="left:1621px;top:708px;width:10px;height:13px;border:1px solid #b4b8c0;border-radius:3px;background:#f3f3f3"></div><div class="t" style="left:1746px;top:707px;line-height:15px;word-spacing:0">7h 37m&nbsp; 0.950s</div><div class="a" style="left:1224px;top:702px;width:40px;height:4px;background:repeating-linear-gradient(90deg,#c2c2c2 0 1px,#d2d2d2 1px 2px)"></div><div class="a" style="left:1041px;top:707px;width:1px;height:316px;background:#6a6a8a"></div><div class="a" style="left:1448px;top:707px;width:1px;height:316px;background:#6a6a8a"></div><svg style="left:0;top:0" width="1856" height="1058" viewBox="0 0 1856 1058"><defs><filter id="sb" x="-100%" y="-100%" width="300%" height="300%"><feGaussianBlur stdDeviation="2.6"/></filter><filter id="sb2" x="-100%" y="-100%" width="300%" height="300%"><feGaussianBlur stdDeviation="6"/></filter><clipPath id="cr"><path d="M794.1 772.6 L801.7 772.6 L801.7 780.7 L804.0 782.5 L810.3 782.5 L811.2 780.1 L816.6 778.0 L822.0 778.3 L823.8 783.4 L827.4 786.9 L829.2 791.4 L831.9 793.2 L831.0 796.8 L828.3 798.1 L827.9 802.2 L831.0 804.9 L833.6 807.6 L835.4 813.0 L840.8 815.7 L847.1 817.5 L852.5 821.1 L851.6 824.3 L848.0 827.4 L847.1 841.7 L849.8 848.0 L854.3 853.4 L862.4 854.3 L864.2 856.1 L867.2 856.1 L866.0 844.4 L872.3 842.6 L876.8 842.6 L878.6 837.6 L884.8 836.3 L885.7 830.1 L892.9 824.7 L897.4 816.6 L901.0 816.6 L906.4 822.9 L902.8 826.5 L899.2 832.8 L898.3 837.2 L892.9 841.7 L889.3 843.5 L889.9 851.6 L888.8 867.8 L894.7 871.4 L904.6 872.8 L903.2 882.1 L907.3 882.1 L910.0 876.8 L916.3 878.6 L916.6 886.6 L910.9 888.4 L911.8 892.9 L914.5 895.6 L913.6 909.1 L914.5 910.9 L911.8 916.3 L911.8 922.6 L905.5 924.4 L904.6 929.8 L898.3 935.1 L892.9 939.6 L888.4 943.2 L867.8 943.2 L861.5 940.5 L860.6 936.0 L854.3 929.8 L848.9 925.3 L845.3 916.3 L847.7 903.7 L842.6 901.0 L838.1 899.2 L837.2 885.7 L832.8 879.5 L831.9 875.9 L829.2 875.9 L826.5 878.9 L806.7 879.5 L804.0 875.0 L805.8 867.8 L800.4 863.3 L798.6 857.9 L790.5 857.0 L783.4 851.6 L778.0 844.4 L777.1 835.4 L778.0 828.3 L775.3 822.9 L778.0 810.3 L781.6 804.0 L782.5 790.5 L789.6 786.9 L792.3 781.6 L792.7 773.5Z"/></clipPath><clipPath id="cy"><path d="M1051.5 919.0 L1055.8 911.5 L1060.1 907.2 L1088.1 902.8 L1103.2 897.5 L1114.0 894.2 L1129.1 891.6 L1140.9 888.4 L1166.8 886.7 L1178.6 883.4 L1189.4 878.1 L1199.1 869.4 L1210.9 868.8 L1210.9 858.7 L1216.3 858.7 L1220.6 864.1 L1227.1 867.3 L1236.8 867.3 L1240.0 861.9 L1243.3 853.3 L1245.4 840.3 L1248.7 838.2 L1248.7 822.0 L1245.4 822.0 L1248.7 818.8 L1253.0 813.4 L1258.4 812.8 L1262.7 820.9 L1278.8 820.9 L1279.9 818.8 L1282.1 818.8 L1285.3 823.1 L1291.8 826.3 L1307.9 826.3 L1309.0 823.1 L1312.2 823.1 L1313.3 826.3 L1338.1 826.3 L1339.2 823.5 L1355.3 823.5 L1356.4 826.3 L1361.8 829.1 L1372.6 831.7 L1384.4 829.6 L1397.4 826.3 L1409.2 823.1 L1413.5 820.9 L1415.7 823.1 L1426.5 823.1 L1426.5 836.5 L1420.0 839.3 L1408.1 842.5 L1398.4 845.7 L1378.0 849.0 L1372.6 854.4 L1360.7 856.5 L1355.3 861.9 L1344.6 866.2 L1320.9 868.4 L1309.0 871.6 L1292.8 880.2 L1282.1 885.6 L1271.3 897.5 L1260.5 905.0 L1249.7 920.1 L1236.8 928.7 L1222.8 936.2 L1210.9 936.2 L1209.9 933.0 L1181.9 933.0 L1175.4 928.7 L1170.0 928.7 L1165.7 933.4 L1152.8 928.7 L1145.2 917.9 L1104.3 917.9 L1104.3 920.1 L1082.7 921.2 L1069.8 922.2 L1068.7 925.5 L1064.4 925.5 L1063.3 922.2 L1053.6 922.2Z"/></clipPath><clipPath id="cg"><path d="M1643.0 760.0 L1644.1 769.8 L1647.2 775.0 L1649.3 785.4 L1649.9 813.4 L1654.1 816.6 L1654.9 828.0 L1657.6 832.2 L1658.6 843.6 L1661.8 847.8 L1665.9 850.2 L1677.4 851.5 L1680.5 854.0 L1685.7 856.1 L1687.3 864.4 L1691.9 868.6 L1693.0 886.2 L1696.1 894.6 L1695.0 898.7 L1687.8 903.9 L1684.6 915.3 L1681.5 926.8 L1680.5 945.5 L1677.4 951.7 L1674.9 956.9 L1670.1 961.1 L1661.8 959.7 L1660.7 949.7 L1658.6 930.9 L1655.5 928.9 L1656.6 901.8 L1653.4 898.7 L1652.4 895.6 L1650.3 894.6 L1652.4 885.2 L1647.2 881.0 L1645.1 872.7 L1638.9 870.2 L1622.2 869.0 L1618.1 863.4 L1616.6 853.0 L1619.1 854.0 L1621.2 860.2 L1623.3 859.2 L1623.7 847.8 L1620.8 840.5 L1621.2 824.9 L1624.3 819.7 L1624.3 812.4 L1626.4 810.3 L1625.8 795.8 L1622.9 792.6 L1623.3 787.4 L1631.6 786.4 L1636.8 783.3 L1636.8 766.6 L1641.0 764.6Z"/></clipPath></defs><path d="M794.1 772.6 L801.7 772.6 L801.7 780.7 L804.0 782.5 L810.3 782.5 L811.2 780.1 L816.6 778.0 L822.0 778.3 L823.8 783.4 L827.4 786.9 L829.2 791.4 L831.9 793.2 L831.0 796.8 L828.3 798.1 L827.9 802.2 L831.0 804.9 L833.6 807.6 L835.4 813.0 L840.8 815.7 L847.1 817.5 L852.5 821.1 L851.6 824.3 L848.0 827.4 L847.1 841.7 L849.8 848.0 L854.3 853.4 L862.4 854.3 L864.2 856.1 L867.2 856.1 L866.0 844.4 L872.3 842.6 L876.8 842.6 L878.6 837.6 L884.8 836.3 L885.7 830.1 L892.9 824.7 L897.4 816.6 L901.0 816.6 L906.4 822.9 L902.8 826.5 L899.2 832.8 L898.3 837.2 L892.9 841.7 L889.3 843.5 L889.9 851.6 L888.8 867.8 L894.7 871.4 L904.6 872.8 L903.2 882.1 L907.3 882.1 L910.0 876.8 L916.3 878.6 L916.6 886.6 L910.9 888.4 L911.8 892.9 L914.5 895.6 L913.6 909.1 L914.5 910.9 L911.8 916.3 L911.8 922.6 L905.5 924.4 L904.6 929.8 L898.3 935.1 L892.9 939.6 L888.4 943.2 L867.8 943.2 L861.5 940.5 L860.6 936.0 L854.3 929.8 L848.9 925.3 L845.3 916.3 L847.7 903.7 L842.6 901.0 L838.1 899.2 L837.2 885.7 L832.8 879.5 L831.9 875.9 L829.2 875.9 L826.5 878.9 L806.7 879.5 L804.0 875.0 L805.8 867.8 L800.4 863.3 L798.6 857.9 L790.5 857.0 L783.4 851.6 L778.0 844.4 L777.1 835.4 L778.0 828.3 L775.3 822.9 L778.0 810.3 L781.6 804.0 L782.5 790.5 L789.6 786.9 L792.3 781.6 L792.7 773.5Z" fill="#1f456c"/><path d="M896.9 784.3 L898.7 784.3 L898.7 785.7 L896.9 785.7ZM919.0 866.0 L922.9 866.0 L922.9 867.8 L919.0 867.8ZM925.3 874.1 L930.6 874.1 L930.6 875.9 L928.9 875.9 L928.9 877.7 L925.3 877.7Z" fill="#1f456c"/><g clip-path="url(#cr)"><path d="M806 818 L830 848 L852 880 L870 905 L878 920" filter="url(#sb2)" stroke="#39699c" stroke-width="26" fill="none" stroke-linecap="round" stroke-linejoin="round" opacity=".75"/><g filter="url(#sb)"><path d="M806 819 C818 828 824 838 830 847 S842 864 850 876 S864 890 868 900 S872 912 878 920" stroke="#6a9bcc" stroke-width="5" fill="none" stroke-linecap="round" opacity=".6"/><ellipse cx="808.5" cy="821.1" rx="8" ry="4.5" transform="rotate(35 808.5 821.1)" fill="#7fb0e0" opacity="0.6"/><ellipse cx="821.1" cy="833.6" rx="6" ry="4" transform="rotate(45 821.1 833.6)" fill="#7fb0e0" opacity="0.6"/><ellipse cx="829.2" cy="846.2" rx="6" ry="4.5" transform="rotate(50 829.2 846.2)" fill="#98c2ea" opacity="0.95"/><ellipse cx="839" cy="860.6" rx="5" ry="3" transform="rotate(55 839 860.6)" fill="#7fb0e0" opacity="0.45"/><ellipse cx="848" cy="875" rx="6" ry="4" transform="rotate(45 848 875)" fill="#98c2ea" opacity="0.7"/><ellipse cx="857" cy="884" rx="6" ry="4" transform="rotate(40 857 884)" fill="#98c2ea" opacity="0.75"/><ellipse cx="866" cy="892" rx="6" ry="4" transform="rotate(40 866 892)" fill="#7fb0e0" opacity="0.7"/><ellipse cx="867.8" cy="907.3" rx="6" ry="5" transform="rotate(60 867.8 907.3)" fill="#7fb0e0" opacity="0.6"/><ellipse cx="876.8" cy="918.1" rx="7" ry="5" transform="rotate(50 876.8 918.1)" fill="#7fb0e0" opacity="0.4"/></g></g><path d="M794.1 772.6 L801.7 772.6 L801.7 780.7 L804.0 782.5 L810.3 782.5 L811.2 780.1 L816.6 778.0 L822.0 778.3 L823.8 783.4 L827.4 786.9 L829.2 791.4 L831.9 793.2 L831.0 796.8 L828.3 798.1 L827.9 802.2 L831.0 804.9 L833.6 807.6 L835.4 813.0 L840.8 815.7 L847.1 817.5 L852.5 821.1 L851.6 824.3 L848.0 827.4 L847.1 841.7 L849.8 848.0 L854.3 853.4 L862.4 854.3 L864.2 856.1 L867.2 856.1 L866.0 844.4 L872.3 842.6 L876.8 842.6 L878.6 837.6 L884.8 836.3 L885.7 830.1 L892.9 824.7 L897.4 816.6 L901.0 816.6 L906.4 822.9 L902.8 826.5 L899.2 832.8 L898.3 837.2 L892.9 841.7 L889.3 843.5 L889.9 851.6 L888.8 867.8 L894.7 871.4 L904.6 872.8 L903.2 882.1 L907.3 882.1 L910.0 876.8 L916.3 878.6 L916.6 886.6 L910.9 888.4 L911.8 892.9 L914.5 895.6 L913.6 909.1 L914.5 910.9 L911.8 916.3 L911.8 922.6 L905.5 924.4 L904.6 929.8 L898.3 935.1 L892.9 939.6 L888.4 943.2 L867.8 943.2 L861.5 940.5 L860.6 936.0 L854.3 929.8 L848.9 925.3 L845.3 916.3 L847.7 903.7 L842.6 901.0 L838.1 899.2 L837.2 885.7 L832.8 879.5 L831.9 875.9 L829.2 875.9 L826.5 878.9 L806.7 879.5 L804.0 875.0 L805.8 867.8 L800.4 863.3 L798.6 857.9 L790.5 857.0 L783.4 851.6 L778.0 844.4 L777.1 835.4 L778.0 828.3 L775.3 822.9 L778.0 810.3 L781.6 804.0 L782.5 790.5 L789.6 786.9 L792.3 781.6 L792.7 773.5ZM896.9 784.3 L898.7 784.3 L898.7 785.7 L896.9 785.7ZM919.0 866.0 L922.9 866.0 L922.9 867.8 L919.0 867.8ZM925.3 874.1 L930.6 874.1 L930.6 875.9 L928.9 875.9 L928.9 877.7 L925.3 877.7Z" fill="none" stroke="#3f86d0" stroke-width="1.300"/><path d="M1051.5 919.0 L1055.8 911.5 L1060.1 907.2 L1088.1 902.8 L1103.2 897.5 L1114.0 894.2 L1129.1 891.6 L1140.9 888.4 L1166.8 886.7 L1178.6 883.4 L1189.4 878.1 L1199.1 869.4 L1210.9 868.8 L1210.9 858.7 L1216.3 858.7 L1220.6 864.1 L1227.1 867.3 L1236.8 867.3 L1240.0 861.9 L1243.3 853.3 L1245.4 840.3 L1248.7 838.2 L1248.7 822.0 L1245.4 822.0 L1248.7 818.8 L1253.0 813.4 L1258.4 812.8 L1262.7 820.9 L1278.8 820.9 L1279.9 818.8 L1282.1 818.8 L1285.3 823.1 L1291.8 826.3 L1307.9 826.3 L1309.0 823.1 L1312.2 823.1 L1313.3 826.3 L1338.1 826.3 L1339.2 823.5 L1355.3 823.5 L1356.4 826.3 L1361.8 829.1 L1372.6 831.7 L1384.4 829.6 L1397.4 826.3 L1409.2 823.1 L1413.5 820.9 L1415.7 823.1 L1426.5 823.1 L1426.5 836.5 L1420.0 839.3 L1408.1 842.5 L1398.4 845.7 L1378.0 849.0 L1372.6 854.4 L1360.7 856.5 L1355.3 861.9 L1344.6 866.2 L1320.9 868.4 L1309.0 871.6 L1292.8 880.2 L1282.1 885.6 L1271.3 897.5 L1260.5 905.0 L1249.7 920.1 L1236.8 928.7 L1222.8 936.2 L1210.9 936.2 L1209.9 933.0 L1181.9 933.0 L1175.4 928.7 L1170.0 928.7 L1165.7 933.4 L1152.8 928.7 L1145.2 917.9 L1104.3 917.9 L1104.3 920.1 L1082.7 921.2 L1069.8 922.2 L1068.7 925.5 L1064.4 925.5 L1063.3 922.2 L1053.6 922.2Z" fill="#1f456c"/><path d="M1224.3 834.3 L1228.2 834.3 L1229.3 837.8 L1235.7 837.8 L1240.0 840.8 L1234.7 842.5 L1231.4 847.2 L1224.3 847.2ZM1346.7 804.1 L1351.0 802.2 L1372.6 802.2 L1374.7 804.1 L1374.7 806.3 L1346.7 806.3ZM1419.6 799.4 L1426.5 799.4 L1426.5 801.6 L1419.6 801.6Z" fill="#1f456c"/><g clip-path="url(#cy)"><path d="M1150 911 L1200 913 C1235 910 1245 890 1254 870 S1265 842 1285 848 S1330 838 1350 834" filter="url(#sb2)" stroke="#39699c" stroke-width="22" fill="none" stroke-linecap="round" stroke-linejoin="round" opacity=".75"/><g filter="url(#sb)"><path d="M1158 911 L1195 910 M1214 918 C1236 910 1246 890 1254 870 S1264 846 1276 844 S1312 846 1346 836" stroke="#6a9bcc" stroke-width="5" fill="none" stroke-linecap="round" opacity=".6"/><ellipse cx="1176.5" cy="910.4" rx="17" ry="3.5" transform="rotate(-2 1176.5 910.4)" fill="#7fb0e0" opacity="0.7"/><ellipse cx="1226" cy="913.6" rx="13" ry="4.5" transform="rotate(-28 1226 913.6)" fill="#98c2ea" opacity="0.9"/><ellipse cx="1245" cy="895" rx="9" ry="4" transform="rotate(-62 1245 895)" fill="#7fb0e0" opacity="0.55"/><ellipse cx="1256" cy="868" rx="12" ry="4" transform="rotate(-68 1256 868)" fill="#7fb0e0" opacity="0.6"/><ellipse cx="1268" cy="846" rx="8" ry="4" transform="rotate(-50 1268 846)" fill="#7fb0e0" opacity="0.55"/><ellipse cx="1284" cy="851" rx="9" ry="3.5" transform="rotate(-12 1284 851)" fill="#7fb0e0" opacity="0.5"/><ellipse cx="1314.4" cy="844.7" rx="16" ry="4" transform="rotate(-14 1314.4 844.7)" fill="#7fb0e0" opacity="0.6"/><ellipse cx="1340" cy="837.5" rx="8" ry="3.5" transform="rotate(-15 1340 837.5)" fill="#7fb0e0" opacity="0.45"/></g></g><path d="M1051.5 919.0 L1055.8 911.5 L1060.1 907.2 L1088.1 902.8 L1103.2 897.5 L1114.0 894.2 L1129.1 891.6 L1140.9 888.4 L1166.8 886.7 L1178.6 883.4 L1189.4 878.1 L1199.1 869.4 L1210.9 868.8 L1210.9 858.7 L1216.3 858.7 L1220.6 864.1 L1227.1 867.3 L1236.8 867.3 L1240.0 861.9 L1243.3 853.3 L1245.4 840.3 L1248.7 838.2 L1248.7 822.0 L1245.4 822.0 L1248.7 818.8 L1253.0 813.4 L1258.4 812.8 L1262.7 820.9 L1278.8 820.9 L1279.9 818.8 L1282.1 818.8 L1285.3 823.1 L1291.8 826.3 L1307.9 826.3 L1309.0 823.1 L1312.2 823.1 L1313.3 826.3 L1338.1 826.3 L1339.2 823.5 L1355.3 823.5 L1356.4 826.3 L1361.8 829.1 L1372.6 831.7 L1384.4 829.6 L1397.4 826.3 L1409.2 823.1 L1413.5 820.9 L1415.7 823.1 L1426.5 823.1 L1426.5 836.5 L1420.0 839.3 L1408.1 842.5 L1398.4 845.7 L1378.0 849.0 L1372.6 854.4 L1360.7 856.5 L1355.3 861.9 L1344.6 866.2 L1320.9 868.4 L1309.0 871.6 L1292.8 880.2 L1282.1 885.6 L1271.3 897.5 L1260.5 905.0 L1249.7 920.1 L1236.8 928.7 L1222.8 936.2 L1210.9 936.2 L1209.9 933.0 L1181.9 933.0 L1175.4 928.7 L1170.0 928.7 L1165.7 933.4 L1152.8 928.7 L1145.2 917.9 L1104.3 917.9 L1104.3 920.1 L1082.7 921.2 L1069.8 922.2 L1068.7 925.5 L1064.4 925.5 L1063.3 922.2 L1053.6 922.2ZM1224.3 834.3 L1228.2 834.3 L1229.3 837.8 L1235.7 837.8 L1240.0 840.8 L1234.7 842.5 L1231.4 847.2 L1224.3 847.2ZM1346.7 804.1 L1351.0 802.2 L1372.6 802.2 L1374.7 804.1 L1374.7 806.3 L1346.7 806.3ZM1419.6 799.4 L1426.5 799.4 L1426.5 801.6 L1419.6 801.6Z" fill="none" stroke="#3f86d0" stroke-width="1.300"/><path d="M1643.0 760.0 L1644.1 769.8 L1647.2 775.0 L1649.3 785.4 L1649.9 813.4 L1654.1 816.6 L1654.9 828.0 L1657.6 832.2 L1658.6 843.6 L1661.8 847.8 L1665.9 850.2 L1677.4 851.5 L1680.5 854.0 L1685.7 856.1 L1687.3 864.4 L1691.9 868.6 L1693.0 886.2 L1696.1 894.6 L1695.0 898.7 L1687.8 903.9 L1684.6 915.3 L1681.5 926.8 L1680.5 945.5 L1677.4 951.7 L1674.9 956.9 L1670.1 961.1 L1661.8 959.7 L1660.7 949.7 L1658.6 930.9 L1655.5 928.9 L1656.6 901.8 L1653.4 898.7 L1652.4 895.6 L1650.3 894.6 L1652.4 885.2 L1647.2 881.0 L1645.1 872.7 L1638.9 870.2 L1622.2 869.0 L1618.1 863.4 L1616.6 853.0 L1619.1 854.0 L1621.2 860.2 L1623.3 859.2 L1623.7 847.8 L1620.8 840.5 L1621.2 824.9 L1624.3 819.7 L1624.3 812.4 L1626.4 810.3 L1625.8 795.8 L1622.9 792.6 L1623.3 787.4 L1631.6 786.4 L1636.8 783.3 L1636.8 766.6 L1641.0 764.6Z" fill="#1f456c"/><g clip-path="url(#cg)"><path d="M1640 800 C1638 835 1650 850 1660 865 S1672 890 1670 910 S1667 930 1667 945" filter="url(#sb2)" stroke="#39699c" stroke-width="17" fill="none" stroke-linecap="round" stroke-linejoin="round" opacity=".75"/><g filter="url(#sb)"><path d="M1640 802 C1637 825 1640 838 1646 846 S1664 866 1670 882 S1670 915 1667 940" stroke="#6a9bcc" stroke-width="5" fill="none" stroke-linecap="round" opacity=".6"/><ellipse cx="1639.9" cy="806.2" rx="3.5" ry="7" transform="rotate(0 1639.9 806.2)" fill="#7fb0e0" opacity="0.5"/><ellipse cx="1638.9" cy="831.1" rx="4" ry="7" transform="rotate(-10 1638.9 831.1)" fill="#7fb0e0" opacity="0.6"/><ellipse cx="1644.1" cy="843.6" rx="4.5" ry="6" transform="rotate(-35 1644.1 843.6)" fill="#98c2ea" opacity="0.95"/><ellipse cx="1656.6" cy="858.2" rx="4" ry="6" transform="rotate(-45 1656.6 858.2)" fill="#7fb0e0" opacity="0.4"/><ellipse cx="1671.1" cy="885.2" rx="5" ry="7" transform="rotate(5 1671.1 885.2)" fill="#98c2ea" opacity="0.85"/><ellipse cx="1670.1" cy="908.1" rx="4" ry="8" transform="rotate(5 1670.1 908.1)" fill="#7fb0e0" opacity="0.55"/><ellipse cx="1667" cy="937.2" rx="4" ry="8" transform="rotate(0 1667 937.2)" fill="#7fb0e0" opacity="0.3"/></g></g><path d="M1643.0 760.0 L1644.1 769.8 L1647.2 775.0 L1649.3 785.4 L1649.9 813.4 L1654.1 816.6 L1654.9 828.0 L1657.6 832.2 L1658.6 843.6 L1661.8 847.8 L1665.9 850.2 L1677.4 851.5 L1680.5 854.0 L1685.7 856.1 L1687.3 864.4 L1691.9 868.6 L1693.0 886.2 L1696.1 894.6 L1695.0 898.7 L1687.8 903.9 L1684.6 915.3 L1681.5 926.8 L1680.5 945.5 L1677.4 951.7 L1674.9 956.9 L1670.1 961.1 L1661.8 959.7 L1660.7 949.7 L1658.6 930.9 L1655.5 928.9 L1656.6 901.8 L1653.4 898.7 L1652.4 895.6 L1650.3 894.6 L1652.4 885.2 L1647.2 881.0 L1645.1 872.7 L1638.9 870.2 L1622.2 869.0 L1618.1 863.4 L1616.6 853.0 L1619.1 854.0 L1621.2 860.2 L1623.3 859.2 L1623.7 847.8 L1620.8 840.5 L1621.2 824.9 L1624.3 819.7 L1624.3 812.4 L1626.4 810.3 L1625.8 795.8 L1622.9 792.6 L1623.3 787.4 L1631.6 786.4 L1636.8 783.3 L1636.8 766.6 L1641.0 764.6Z" fill="none" stroke="#3f86d0" stroke-width="1.300"/><g stroke="#fff" stroke-width="1.200" fill="none"><path d="M636.5 722V1021M636 1021.400H1041"/><path d="M636.5 738.5h6"/><path d="M636.5 766.7h6"/><path d="M636.5 795.0h11"/><path d="M636.5 823.2h6"/><path d="M636.5 851.4h6"/><path d="M636.5 879.6h6"/><path d="M636.5 907.9h11"/><path d="M636.5 936.1h6"/><path d="M636.5 964.3h6"/><path d="M636.5 992.6h6"/><path d="M647.4 1021.400v-5.5"/><path d="M671.0 1021.400v-5.5"/><path d="M694.7 1021.400v-9.5"/><path d="M718.3 1021.400v-5.5"/><path d="M742.0 1021.400v-5.5"/><path d="M765.6 1021.400v-5.5"/><path d="M789.2 1021.400v-9.5"/><path d="M812.9 1021.400v-5.5"/><path d="M836.5 1021.400v-5.5"/><path d="M860.2 1021.400v-5.5"/><path d="M883.8 1021.400v-9.5"/><path d="M907.4 1021.400v-5.5"/><path d="M931.1 1021.400v-5.5"/><path d="M954.7 1021.400v-5.5"/><path d="M978.4 1021.400v-9.5"/><path d="M1002.0 1021.400v-5.5"/><path d="M1025.6 1021.400v-5.5"/></g><g fill="#f4f4f4" font-family="'Liberation Sans',sans-serif" font-size="12"><text x="654.8" y="796.2" textLength="54" lengthAdjust="spacingAndGlyphs">65° 45' 0"</text><text x="654.8" y="908.5" textLength="54" lengthAdjust="spacingAndGlyphs">65° 30' 0"</text><text x="654.8" y="1004.7" textLength="59" lengthAdjust="spacingAndGlyphs">7h 40m 0s</text><text x="749.3" y="1004.7" textLength="59" lengthAdjust="spacingAndGlyphs">7h 38m 0s</text><text x="843.3" y="1004.7" textLength="59" lengthAdjust="spacingAndGlyphs">7h 36m 0s</text><text x="938.3" y="1004.7" textLength="59" lengthAdjust="spacingAndGlyphs">7h 34m 0s</text></g><g stroke="#fff" stroke-width="1.200" fill="none"><path d="M1043.5 722V1021M1043 1021.400H1448"/><path d="M1043.5 746.7h6"/><path d="M1043.5 773.1h6"/><path d="M1043.5 799.5h11"/><path d="M1043.5 825.9h6"/><path d="M1043.5 852.3h6"/><path d="M1043.5 878.7h6"/><path d="M1043.5 905.1h11"/><path d="M1043.5 931.5h6"/><path d="M1043.5 957.9h6"/><path d="M1043.5 984.3h6"/><path d="M1085.6 1021.400v-5.5"/><path d="M1117.1 1021.400v-5.5"/><path d="M1148.6 1021.400v-5.5"/><path d="M1180.1 1021.400v-9.5"/><path d="M1211.6 1021.400v-5.5"/><path d="M1243.1 1021.400v-5.5"/><path d="M1274.6 1021.400v-5.5"/><path d="M1306.1 1021.400v-9.5"/><path d="M1337.6 1021.400v-5.5"/><path d="M1369.1 1021.400v-5.5"/><path d="M1400.6 1021.400v-5.5"/><path d="M1432.1 1021.400v-9.5"/><path d="M1043.500 1010.500H1054.500V1021"/></g><g fill="#f4f4f4" font-family="'Liberation Sans',sans-serif" font-size="12"><text x="1064.2" y="804" textLength="61" lengthAdjust="spacingAndGlyphs">0.000 km/s</text><text x="1064.2" y="908.2" textLength="75" lengthAdjust="spacingAndGlyphs">200.000 km/s</text><text x="1140.4" y="1004.7" textLength="59" lengthAdjust="spacingAndGlyphs">7h 38m 0s</text><text x="1266.3" y="1004.7" textLength="59" lengthAdjust="spacingAndGlyphs">7h 36m 0s</text></g><g stroke="#fff" stroke-width="1.200" fill="none"><path d="M1450.5 722V1021M1461.5 1021.400H1855"/><path d="M1450.5 740.5h6"/><path d="M1450.5 768.7h6"/><path d="M1450.5 797.0h11"/><path d="M1450.5 825.2h6"/><path d="M1450.5 853.4h6"/><path d="M1450.5 881.6h6"/><path d="M1450.5 909.9h11"/><path d="M1450.5 938.1h6"/><path d="M1450.5 966.3h6"/><path d="M1450.5 994.6h6"/><path d="M1501.5 1021.400v-5.5"/><path d="M1550.2 1021.400v-5.5"/><path d="M1598.8 1021.400v-9.5"/><path d="M1647.5 1021.400v-5.5"/><path d="M1696.1 1021.400v-5.5"/><path d="M1744.8 1021.400v-5.5"/><path d="M1793.4 1021.400v-9.5"/><path d="M1842.0 1021.400v-5.5"/><path d="M1453.500 1021.400v-4"/></g><g fill="#f4f4f4" font-family="'Liberation Sans',sans-serif" font-size="12"><text x="1468.4" y="798.6" textLength="54" lengthAdjust="spacingAndGlyphs">65° 45' 0"</text><text x="1468.4" y="911.6" textLength="54" lengthAdjust="spacingAndGlyphs">65° 30' 0"</text><text x="1560.3" y="1004.7" textLength="61" lengthAdjust="spacingAndGlyphs">0.000 km/s</text><text x="1755.5" y="1004.7" textLength="75" lengthAdjust="spacingAndGlyphs">500.000 km/s</text></g></svg><!-- notes -->
<div class="a" style="left:19px;top:333px;width:468px;height:92px;border:3px solid #000;background:#fff"></div>
<div class="a" style="left:27px;top:339px;font-size:21px;line-height:24px;white-space:nowrap;color:#111">Click a segment: this it will be converted<br>as a mask for Bbarolo. If Input Mask Active<br>is untoggled, Bbarolo will build a mask.</div>
<svg style="left:100px;top:310px" width="24" height="26"><path d="M11.500 24V5" stroke="#000" stroke-width="3" fill="none"/><path d="M6 14.500L11.500 4.500L17.500 12.500" stroke="#000" stroke-width="3" fill="none" stroke-linejoin="miter"/></svg>
<div class="a" style="left:590px;top:522px;width:465px;height:152px;border:3px solid #000;background:#fff"></div>
<div class="a" style="left:596.500px;top:528px;font-size:21px;line-height:24px;white-space:nowrap;color:#111">Chose the Input parameters for the fitting.<br>If Automatic (or in Manual for any<br>parameter equal to zero), Bbarolo will<br>try to guess automatically the optimal<br>parameters. Proper information regarding<br>the BEAM is fundamental.</div>
<div class="btn" style="left:1823px;top:1027px;width:31px;height:28px;border-color:#8c8c8c;box-shadow:none"></div>
<svg style="left:1823px;top:1027px" width="31" height="28" viewBox="1823 1027 31 28"><circle cx="1838.200" cy="1041.200" r="11.400" fill="#7a9a9a" opacity=".5"/><circle cx="1837.400" cy="1040.500" r="11.400" fill="#ff0000"/><path d="M1832.100 1035.200L1842.700 1045.800M1842.700 1035.200L1832.100 1045.800" stroke="#fff" stroke-width="3" fill="none"/></svg><!--close-x-->
</body></html>
